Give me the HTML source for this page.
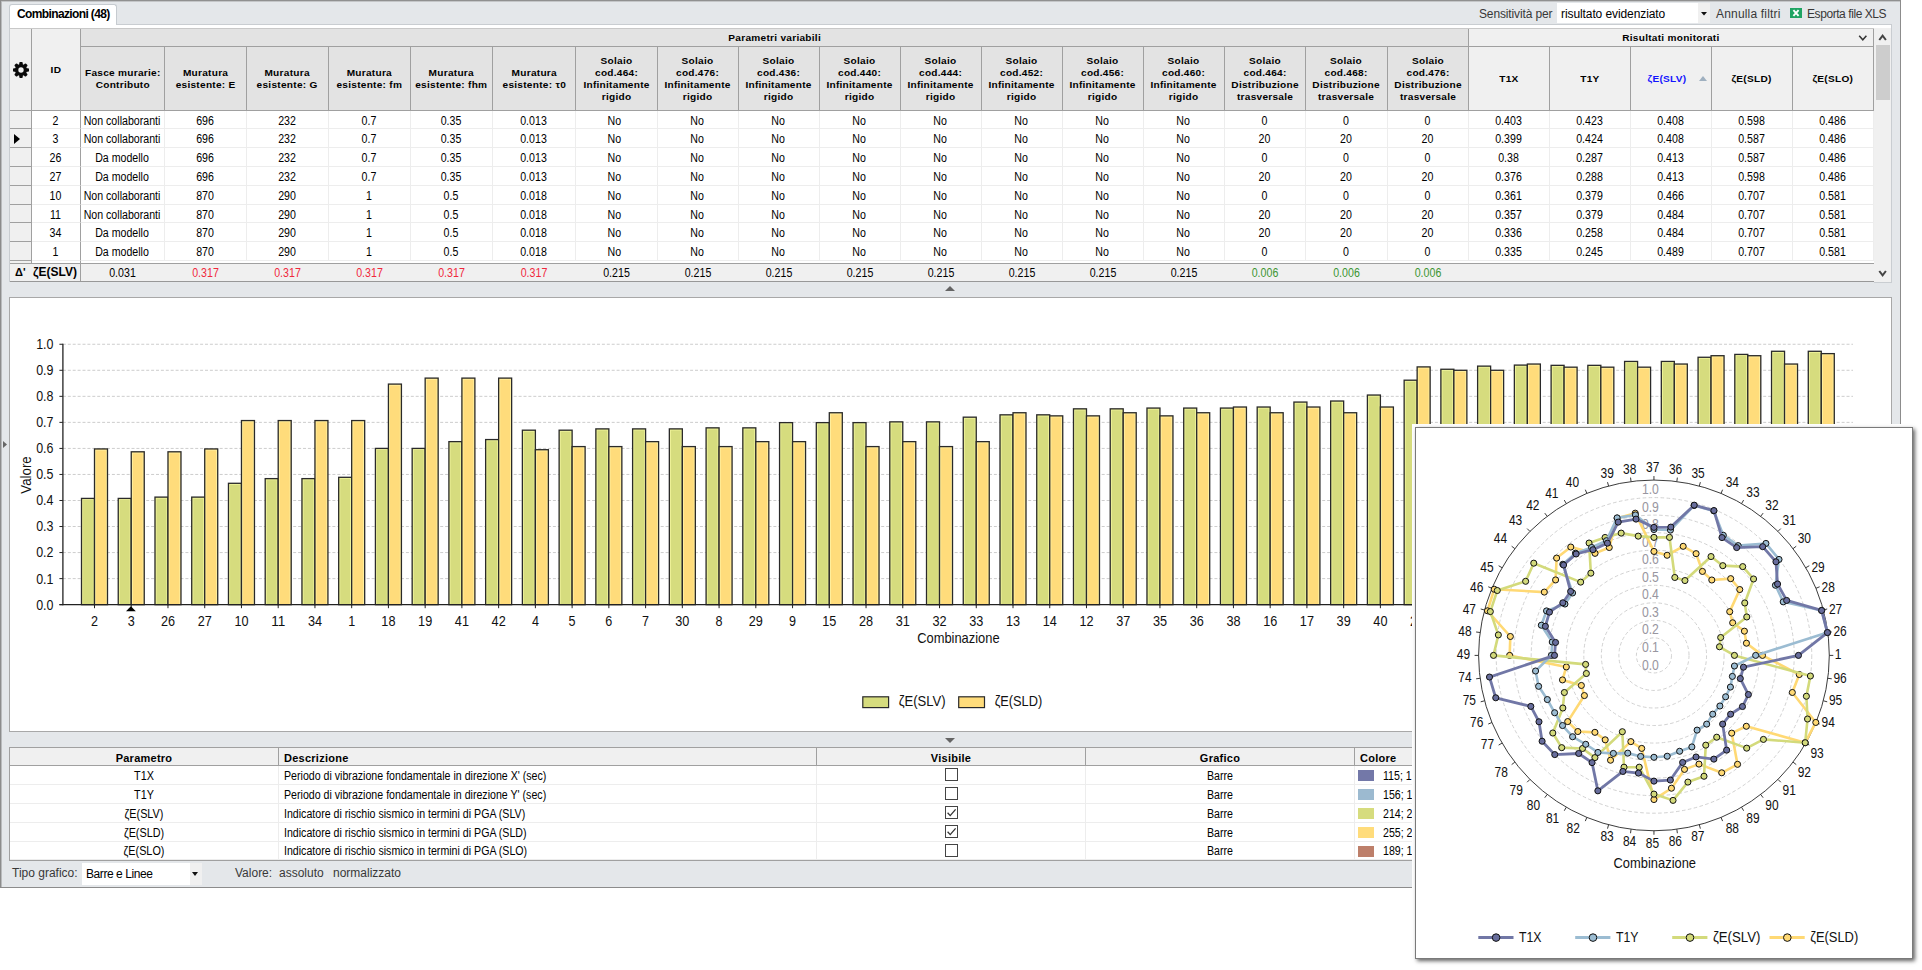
<!DOCTYPE html>
<html><head><meta charset="utf-8"><title>Combinazioni</title>
<style>
html,body{margin:0;padding:0;background:#fff;}
body{width:1922px;height:970px;overflow:hidden;position:relative;font-family:"Liberation Sans",sans-serif;color:#000;}
div,span{box-sizing:border-box;}
.a{position:absolute;}
.win{position:absolute;left:0;top:0;width:1901px;height:888px;background:#e4e7ea;}
.ui{font-size:12px;color:#383838;white-space:nowrap;}
.hc{position:absolute;display:flex;align-items:center;justify-content:center;text-align:center;font-weight:bold;font-size:9.3px;line-height:12px;letter-spacing:0.25px;color:#000;border-right:1px solid #a0a0a0;border-bottom:1px solid #a0a0a0;}
.hc i{display:block;font-style:normal;transform:scaleX(1.085);}
.dc i,.fc i{display:block;margin:0 -20px;font-style:normal;transform:translate(-0.5px,0.5px) scaleX(0.885);}
.dc i.s{transform:translate(-0.5px,1.2px) scaleX(0.885);}
.dc i.n{transform:translate(-0.9px,0.5px) scaleX(0.885);}
.dc i.s.n{transform:translate(-0.9px,1.2px) scaleX(0.885);}
.dc i.m{transform:translate(-2.2px,0.5px) scaleX(0.885);}
.dc i.s.m{transform:translate(-2.2px,1.2px) scaleX(0.885);}
.dc i.l{display:inline-block;margin:0;transform-origin:0 50%;}
.dc{position:absolute;text-align:center;font-size:12px;white-space:nowrap;color:#000;border-right:1px solid #ededed;border-bottom:1px solid #ededed;background:#fff;overflow:hidden;}
.rh{position:absolute;background:#f0f0f0;border-right:1px solid #a0a0a0;border-bottom:1px solid #a0a0a0;}
.fc{position:absolute;text-align:center;font-size:12px;white-space:nowrap;color:#000;}
.red{color:#f0283c;}
.grn{color:#3c9632;}
svg{position:absolute;overflow:visible;}
svg text{font-family:"Liberation Sans",sans-serif;}
</style></head><body>

<div class="win"></div>
<div class="a" style="left:0px;top:0px;width:1901px;height:1px;background:#909090;"></div>
<div class="a" style="left:0px;top:1px;width:1901px;height:1px;background:#c4c6c8;"></div>
<div class="a" style="left:0px;top:0px;width:1px;height:888px;background:#8c8c8c;"></div>
<div class="a" style="left:1px;top:1px;width:1px;height:886px;background:#b9bbbd;"></div>
<div class="a" style="left:1900px;top:0px;width:1px;height:888px;background:#8c8c8c;"></div>
<div class="a" style="left:0px;top:887px;width:1901px;height:1px;background:#8c8c8c;"></div>
<div class="a" style="left:9px;top:4px;width:108px;height:22px;background:#fff;border:1px solid #c6cbd0;border-bottom:none;border-radius:3px 3px 0 0;"></div>
<div class="a" style="left:17px;top:6px;width:100px;height:16px;font-size:12px;font-weight:bold;line-height:16px;white-space:nowrap;letter-spacing:-0.63px;">Combinazioni (48)</div>
<div class="a" style="left:116px;top:24px;width:1776px;height:1px;background:#c9cdd1;"></div>
<div class="a" style="left:10px;top:25px;width:1881px;height:3px;background:#fff;"></div>
<div class="a" style="left:9px;top:25px;width:1px;height:257px;background:#c9cdd1;"></div>
<div class="a" style="left:1891px;top:24px;width:1px;height:258px;background:#c9cdd1;"></div>
<div class="a ui" style="left:1479px;top:5.5px;width:80px;height:16px;line-height:16px;letter-spacing:-0.13px;">Sensitivit&agrave; per</div>
<div class="a" style="left:1557px;top:3px;width:141px;height:20px;background:#fff;"></div>
<div class="a" style="left:1698px;top:3px;width:12px;height:20px;background:#f0f0f0;"></div>
<div class="a ui" style="left:1561px;top:6px;width:130px;height:16px;line-height:16px;letter-spacing:-0.09px;color:#000;">risultato evidenziato</div>
<svg style="left:1701px;top:11.5px" width="6" height="3.5"><path d="M0 0H6L3 3.5Z" fill="#111"/></svg>
<div class="a ui" style="left:1716px;top:5.5px;width:70px;height:16px;line-height:16px;letter-spacing:0.18px;">Annulla filtri</div>
<div class="a" style="left:1790px;top:8px;width:12px;height:10px;background:#1fa463;"></div>
<svg style="left:1790px;top:8px" width="12" height="10"><path d="M3.4 2.2L8.6 7.8M8.6 2.2L3.4 7.8" stroke="#fff" stroke-width="1.9" fill="none"/></svg>
<div class="a ui" style="left:1807px;top:5.5px;width:90px;height:16px;line-height:16px;letter-spacing:-0.43px;">Esporta file XLS</div>
<svg style="left:3px;top:441px" width="4" height="7"><path d="M0 0L4 3.5L0 7Z" fill="#666"/></svg>
<svg style="left:945px;top:286px" width="10" height="5"><path d="M0 5H10L5 0Z" fill="#646464"/></svg>
<svg style="left:945px;top:738px" width="10" height="5"><path d="M0 0H10L5 5Z" fill="#646464"/></svg>
<div class="a" style="left:10px;top:28px;width:1864px;height:254px;background:#fff;"></div>
<div class="a" style="left:10px;top:28px;width:1864px;height:1px;background:#c8c8c8;"></div>
<div class="hc" style="left:10px;top:29px;width:22px;height:82px;background:#f0f0f0;"></div>
<svg style="left:13.1px;top:61.7px" width="16" height="16" viewBox="-8 -8 16 16"><g fill="#0a0a0a"><rect x="-1.75" y="-8" width="3.5" height="16" rx="1" transform="rotate(0)"/><rect x="-1.75" y="-8" width="3.5" height="16" rx="1" transform="rotate(45)"/><rect x="-1.75" y="-8" width="3.5" height="16" rx="1" transform="rotate(90)"/><rect x="-1.75" y="-8" width="3.5" height="16" rx="1" transform="rotate(135)"/><circle r="6.1"/></g><circle r="2.7" fill="#f0f0f0"/></svg>
<div class="hc" style="left:32px;top:29px;width:49px;height:82px;background:#f0f0f0;"><i>ID</i></div>
<div class="hc" style="left:81px;top:29px;width:1388px;height:18px;background:#e3e3e3;"><i>Parametri variabili</i></div>
<div class="hc" style="left:1469px;top:29px;width:405px;height:18px;background:#f0f0f0;"><i>Risultati monitorati</i></div>
<svg style="left:1858px;top:35px" width="10" height="6"><path d="M1.2 0.8L4.8 4.8L8.4 0.8" stroke="#333" stroke-width="1.5" fill="none"/></svg>
<div class="hc" style="left:81px;top:47px;width:84px;height:64px;background:#e3e3e3;"><i>Fasce murarie:<br>Contributo</i></div>
<div class="hc" style="left:165px;top:47px;width:82px;height:64px;background:#e3e3e3;"><i>Muratura<br>esistente: E</i></div>
<div class="hc" style="left:247px;top:47px;width:82px;height:64px;background:#e3e3e3;"><i>Muratura<br>esistente: G</i></div>
<div class="hc" style="left:329px;top:47px;width:82px;height:64px;background:#e3e3e3;"><i>Muratura<br>esistente: fm</i></div>
<div class="hc" style="left:411px;top:47px;width:82px;height:64px;background:#e3e3e3;"><i>Muratura<br>esistente: fhm</i></div>
<div class="hc" style="left:493px;top:47px;width:83px;height:64px;background:#e3e3e3;"><i>Muratura<br>esistente: &tau;0</i></div>
<div class="hc" style="left:576px;top:47px;width:82px;height:64px;background:#e3e3e3;"><i>Solaio<br>cod.464:<br>Infinitamente<br>rigido</i></div>
<div class="hc" style="left:658px;top:47px;width:81px;height:64px;background:#e3e3e3;"><i>Solaio<br>cod.476:<br>Infinitamente<br>rigido</i></div>
<div class="hc" style="left:739px;top:47px;width:81px;height:64px;background:#e3e3e3;"><i>Solaio<br>cod.436:<br>Infinitamente<br>rigido</i></div>
<div class="hc" style="left:820px;top:47px;width:81px;height:64px;background:#e3e3e3;"><i>Solaio<br>cod.440:<br>Infinitamente<br>rigido</i></div>
<div class="hc" style="left:901px;top:47px;width:81px;height:64px;background:#e3e3e3;"><i>Solaio<br>cod.444:<br>Infinitamente<br>rigido</i></div>
<div class="hc" style="left:982px;top:47px;width:81px;height:64px;background:#e3e3e3;"><i>Solaio<br>cod.452:<br>Infinitamente<br>rigido</i></div>
<div class="hc" style="left:1063px;top:47px;width:81px;height:64px;background:#e3e3e3;"><i>Solaio<br>cod.456:<br>Infinitamente<br>rigido</i></div>
<div class="hc" style="left:1144px;top:47px;width:81px;height:64px;background:#e3e3e3;"><i>Solaio<br>cod.460:<br>Infinitamente<br>rigido</i></div>
<div class="hc" style="left:1225px;top:47px;width:81px;height:64px;background:#e3e3e3;"><i>Solaio<br>cod.464:<br>Distribuzione<br>trasversale</i></div>
<div class="hc" style="left:1306px;top:47px;width:82px;height:64px;background:#e3e3e3;"><i>Solaio<br>cod.468:<br>Distribuzione<br>trasversale</i></div>
<div class="hc" style="left:1388px;top:47px;width:81px;height:64px;background:#e3e3e3;"><i>Solaio<br>cod.476:<br>Distribuzione<br>trasversale</i></div>
<div class="hc" style="left:1469px;top:47px;width:81px;height:64px;background:#f0f0f0;"><i>T1X</i></div>
<div class="hc" style="left:1550px;top:47px;width:81px;height:64px;background:#f0f0f0;"><i>T1Y</i></div>
<div class="hc" style="left:1631px;top:47px;width:81px;height:64px;background:#f0f0f0;color:#1414ff;padding-right:9px;"><i>&zeta;E(SLV)</i></div>
<div class="hc" style="left:1712px;top:47px;width:81px;height:64px;background:#f0f0f0;"><i>&zeta;E(SLD)</i></div>
<div class="hc" style="left:1793px;top:47px;width:81px;height:64px;background:#f0f0f0;"><i>&zeta;E(SLO)</i></div>
<svg style="left:1699px;top:76px" width="8" height="5"><path d="M0 5H8L4 0Z" fill="#9fb0c0"/></svg>
<div class="rh" style="left:10px;top:111px;width:22px;height:18px;"></div>
<div class="dc" style="left:32px;top:111px;width:49px;height:18px;line-height:18px;border-right:1px solid #a0a0a0;"><i>2</i></div>
<div class="dc" style="left:81px;top:111px;width:84px;height:18px;line-height:18px;"><i>Non collaboranti</i></div>
<div class="dc" style="left:165px;top:111px;width:82px;height:18px;line-height:18px;"><i>696</i></div>
<div class="dc" style="left:247px;top:111px;width:82px;height:18px;line-height:18px;"><i>232</i></div>
<div class="dc" style="left:329px;top:111px;width:82px;height:18px;line-height:18px;"><i>0.7</i></div>
<div class="dc" style="left:411px;top:111px;width:82px;height:18px;line-height:18px;"><i>0.35</i></div>
<div class="dc" style="left:493px;top:111px;width:83px;height:18px;line-height:18px;"><i>0.013</i></div>
<div class="dc" style="left:576px;top:111px;width:82px;height:18px;line-height:18px;"><i class="m">No</i></div>
<div class="dc" style="left:658px;top:111px;width:81px;height:18px;line-height:18px;"><i class="n">No</i></div>
<div class="dc" style="left:739px;top:111px;width:81px;height:18px;line-height:18px;"><i class="n">No</i></div>
<div class="dc" style="left:820px;top:111px;width:81px;height:18px;line-height:18px;"><i class="n">No</i></div>
<div class="dc" style="left:901px;top:111px;width:81px;height:18px;line-height:18px;"><i class="n">No</i></div>
<div class="dc" style="left:982px;top:111px;width:81px;height:18px;line-height:18px;"><i class="n">No</i></div>
<div class="dc" style="left:1063px;top:111px;width:81px;height:18px;line-height:18px;"><i class="n">No</i></div>
<div class="dc" style="left:1144px;top:111px;width:81px;height:18px;line-height:18px;"><i class="n">No</i></div>
<div class="dc" style="left:1225px;top:111px;width:81px;height:18px;line-height:18px;"><i>0</i></div>
<div class="dc" style="left:1306px;top:111px;width:82px;height:18px;line-height:18px;"><i>0</i></div>
<div class="dc" style="left:1388px;top:111px;width:81px;height:18px;line-height:18px;"><i>0</i></div>
<div class="dc" style="left:1469px;top:111px;width:81px;height:18px;line-height:18px;"><i>0.403</i></div>
<div class="dc" style="left:1550px;top:111px;width:81px;height:18px;line-height:18px;"><i>0.423</i></div>
<div class="dc" style="left:1631px;top:111px;width:81px;height:18px;line-height:18px;"><i>0.408</i></div>
<div class="dc" style="left:1712px;top:111px;width:81px;height:18px;line-height:18px;"><i>0.598</i></div>
<div class="dc" style="left:1793px;top:111px;width:81px;height:18px;line-height:18px;"><i>0.486</i></div>
<div class="rh" style="left:10px;top:129px;width:22px;height:19px;"></div>
<div class="dc" style="left:32px;top:129px;width:49px;height:19px;line-height:19px;border-right:1px solid #a0a0a0;"><i class="s">3</i></div>
<div class="dc" style="left:81px;top:129px;width:84px;height:19px;line-height:19px;"><i class="s">Non collaboranti</i></div>
<div class="dc" style="left:165px;top:129px;width:82px;height:19px;line-height:19px;"><i class="s">696</i></div>
<div class="dc" style="left:247px;top:129px;width:82px;height:19px;line-height:19px;"><i class="s">232</i></div>
<div class="dc" style="left:329px;top:129px;width:82px;height:19px;line-height:19px;"><i class="s">0.7</i></div>
<div class="dc" style="left:411px;top:129px;width:82px;height:19px;line-height:19px;"><i class="s">0.35</i></div>
<div class="dc" style="left:493px;top:129px;width:83px;height:19px;line-height:19px;"><i class="s">0.013</i></div>
<div class="dc" style="left:576px;top:129px;width:82px;height:19px;line-height:19px;"><i class="s m">No</i></div>
<div class="dc" style="left:658px;top:129px;width:81px;height:19px;line-height:19px;"><i class="s n">No</i></div>
<div class="dc" style="left:739px;top:129px;width:81px;height:19px;line-height:19px;"><i class="s n">No</i></div>
<div class="dc" style="left:820px;top:129px;width:81px;height:19px;line-height:19px;"><i class="s n">No</i></div>
<div class="dc" style="left:901px;top:129px;width:81px;height:19px;line-height:19px;"><i class="s n">No</i></div>
<div class="dc" style="left:982px;top:129px;width:81px;height:19px;line-height:19px;"><i class="s n">No</i></div>
<div class="dc" style="left:1063px;top:129px;width:81px;height:19px;line-height:19px;"><i class="s n">No</i></div>
<div class="dc" style="left:1144px;top:129px;width:81px;height:19px;line-height:19px;"><i class="s n">No</i></div>
<div class="dc" style="left:1225px;top:129px;width:81px;height:19px;line-height:19px;"><i class="s">20</i></div>
<div class="dc" style="left:1306px;top:129px;width:82px;height:19px;line-height:19px;"><i class="s">20</i></div>
<div class="dc" style="left:1388px;top:129px;width:81px;height:19px;line-height:19px;"><i class="s">20</i></div>
<div class="dc" style="left:1469px;top:129px;width:81px;height:19px;line-height:19px;"><i class="s">0.399</i></div>
<div class="dc" style="left:1550px;top:129px;width:81px;height:19px;line-height:19px;"><i class="s">0.424</i></div>
<div class="dc" style="left:1631px;top:129px;width:81px;height:19px;line-height:19px;"><i class="s">0.408</i></div>
<div class="dc" style="left:1712px;top:129px;width:81px;height:19px;line-height:19px;"><i class="s">0.587</i></div>
<div class="dc" style="left:1793px;top:129px;width:81px;height:19px;line-height:19px;"><i class="s">0.486</i></div>
<div class="rh" style="left:10px;top:148px;width:22px;height:19px;"></div>
<div class="dc" style="left:32px;top:148px;width:49px;height:19px;line-height:19px;border-right:1px solid #a0a0a0;"><i class="s">26</i></div>
<div class="dc" style="left:81px;top:148px;width:84px;height:19px;line-height:19px;"><i class="s">Da modello</i></div>
<div class="dc" style="left:165px;top:148px;width:82px;height:19px;line-height:19px;"><i class="s">696</i></div>
<div class="dc" style="left:247px;top:148px;width:82px;height:19px;line-height:19px;"><i class="s">232</i></div>
<div class="dc" style="left:329px;top:148px;width:82px;height:19px;line-height:19px;"><i class="s">0.7</i></div>
<div class="dc" style="left:411px;top:148px;width:82px;height:19px;line-height:19px;"><i class="s">0.35</i></div>
<div class="dc" style="left:493px;top:148px;width:83px;height:19px;line-height:19px;"><i class="s">0.013</i></div>
<div class="dc" style="left:576px;top:148px;width:82px;height:19px;line-height:19px;"><i class="s m">No</i></div>
<div class="dc" style="left:658px;top:148px;width:81px;height:19px;line-height:19px;"><i class="s n">No</i></div>
<div class="dc" style="left:739px;top:148px;width:81px;height:19px;line-height:19px;"><i class="s n">No</i></div>
<div class="dc" style="left:820px;top:148px;width:81px;height:19px;line-height:19px;"><i class="s n">No</i></div>
<div class="dc" style="left:901px;top:148px;width:81px;height:19px;line-height:19px;"><i class="s n">No</i></div>
<div class="dc" style="left:982px;top:148px;width:81px;height:19px;line-height:19px;"><i class="s n">No</i></div>
<div class="dc" style="left:1063px;top:148px;width:81px;height:19px;line-height:19px;"><i class="s n">No</i></div>
<div class="dc" style="left:1144px;top:148px;width:81px;height:19px;line-height:19px;"><i class="s n">No</i></div>
<div class="dc" style="left:1225px;top:148px;width:81px;height:19px;line-height:19px;"><i class="s">0</i></div>
<div class="dc" style="left:1306px;top:148px;width:82px;height:19px;line-height:19px;"><i class="s">0</i></div>
<div class="dc" style="left:1388px;top:148px;width:81px;height:19px;line-height:19px;"><i class="s">0</i></div>
<div class="dc" style="left:1469px;top:148px;width:81px;height:19px;line-height:19px;"><i class="s">0.38</i></div>
<div class="dc" style="left:1550px;top:148px;width:81px;height:19px;line-height:19px;"><i class="s">0.287</i></div>
<div class="dc" style="left:1631px;top:148px;width:81px;height:19px;line-height:19px;"><i class="s">0.413</i></div>
<div class="dc" style="left:1712px;top:148px;width:81px;height:19px;line-height:19px;"><i class="s">0.587</i></div>
<div class="dc" style="left:1793px;top:148px;width:81px;height:19px;line-height:19px;"><i class="s">0.486</i></div>
<div class="rh" style="left:10px;top:167px;width:22px;height:19px;"></div>
<div class="dc" style="left:32px;top:167px;width:49px;height:19px;line-height:19px;border-right:1px solid #a0a0a0;"><i>27</i></div>
<div class="dc" style="left:81px;top:167px;width:84px;height:19px;line-height:19px;"><i>Da modello</i></div>
<div class="dc" style="left:165px;top:167px;width:82px;height:19px;line-height:19px;"><i>696</i></div>
<div class="dc" style="left:247px;top:167px;width:82px;height:19px;line-height:19px;"><i>232</i></div>
<div class="dc" style="left:329px;top:167px;width:82px;height:19px;line-height:19px;"><i>0.7</i></div>
<div class="dc" style="left:411px;top:167px;width:82px;height:19px;line-height:19px;"><i>0.35</i></div>
<div class="dc" style="left:493px;top:167px;width:83px;height:19px;line-height:19px;"><i>0.013</i></div>
<div class="dc" style="left:576px;top:167px;width:82px;height:19px;line-height:19px;"><i class="m">No</i></div>
<div class="dc" style="left:658px;top:167px;width:81px;height:19px;line-height:19px;"><i class="n">No</i></div>
<div class="dc" style="left:739px;top:167px;width:81px;height:19px;line-height:19px;"><i class="n">No</i></div>
<div class="dc" style="left:820px;top:167px;width:81px;height:19px;line-height:19px;"><i class="n">No</i></div>
<div class="dc" style="left:901px;top:167px;width:81px;height:19px;line-height:19px;"><i class="n">No</i></div>
<div class="dc" style="left:982px;top:167px;width:81px;height:19px;line-height:19px;"><i class="n">No</i></div>
<div class="dc" style="left:1063px;top:167px;width:81px;height:19px;line-height:19px;"><i class="n">No</i></div>
<div class="dc" style="left:1144px;top:167px;width:81px;height:19px;line-height:19px;"><i class="n">No</i></div>
<div class="dc" style="left:1225px;top:167px;width:81px;height:19px;line-height:19px;"><i>20</i></div>
<div class="dc" style="left:1306px;top:167px;width:82px;height:19px;line-height:19px;"><i>20</i></div>
<div class="dc" style="left:1388px;top:167px;width:81px;height:19px;line-height:19px;"><i>20</i></div>
<div class="dc" style="left:1469px;top:167px;width:81px;height:19px;line-height:19px;"><i>0.376</i></div>
<div class="dc" style="left:1550px;top:167px;width:81px;height:19px;line-height:19px;"><i>0.288</i></div>
<div class="dc" style="left:1631px;top:167px;width:81px;height:19px;line-height:19px;"><i>0.413</i></div>
<div class="dc" style="left:1712px;top:167px;width:81px;height:19px;line-height:19px;"><i>0.598</i></div>
<div class="dc" style="left:1793px;top:167px;width:81px;height:19px;line-height:19px;"><i>0.486</i></div>
<div class="rh" style="left:10px;top:186px;width:22px;height:19px;"></div>
<div class="dc" style="left:32px;top:186px;width:49px;height:19px;line-height:19px;border-right:1px solid #a0a0a0;"><i>10</i></div>
<div class="dc" style="left:81px;top:186px;width:84px;height:19px;line-height:19px;"><i>Non collaboranti</i></div>
<div class="dc" style="left:165px;top:186px;width:82px;height:19px;line-height:19px;"><i>870</i></div>
<div class="dc" style="left:247px;top:186px;width:82px;height:19px;line-height:19px;"><i>290</i></div>
<div class="dc" style="left:329px;top:186px;width:82px;height:19px;line-height:19px;"><i>1</i></div>
<div class="dc" style="left:411px;top:186px;width:82px;height:19px;line-height:19px;"><i>0.5</i></div>
<div class="dc" style="left:493px;top:186px;width:83px;height:19px;line-height:19px;"><i>0.018</i></div>
<div class="dc" style="left:576px;top:186px;width:82px;height:19px;line-height:19px;"><i class="m">No</i></div>
<div class="dc" style="left:658px;top:186px;width:81px;height:19px;line-height:19px;"><i class="n">No</i></div>
<div class="dc" style="left:739px;top:186px;width:81px;height:19px;line-height:19px;"><i class="n">No</i></div>
<div class="dc" style="left:820px;top:186px;width:81px;height:19px;line-height:19px;"><i class="n">No</i></div>
<div class="dc" style="left:901px;top:186px;width:81px;height:19px;line-height:19px;"><i class="n">No</i></div>
<div class="dc" style="left:982px;top:186px;width:81px;height:19px;line-height:19px;"><i class="n">No</i></div>
<div class="dc" style="left:1063px;top:186px;width:81px;height:19px;line-height:19px;"><i class="n">No</i></div>
<div class="dc" style="left:1144px;top:186px;width:81px;height:19px;line-height:19px;"><i class="n">No</i></div>
<div class="dc" style="left:1225px;top:186px;width:81px;height:19px;line-height:19px;"><i>0</i></div>
<div class="dc" style="left:1306px;top:186px;width:82px;height:19px;line-height:19px;"><i>0</i></div>
<div class="dc" style="left:1388px;top:186px;width:81px;height:19px;line-height:19px;"><i>0</i></div>
<div class="dc" style="left:1469px;top:186px;width:81px;height:19px;line-height:19px;"><i>0.361</i></div>
<div class="dc" style="left:1550px;top:186px;width:81px;height:19px;line-height:19px;"><i>0.379</i></div>
<div class="dc" style="left:1631px;top:186px;width:81px;height:19px;line-height:19px;"><i>0.466</i></div>
<div class="dc" style="left:1712px;top:186px;width:81px;height:19px;line-height:19px;"><i>0.707</i></div>
<div class="dc" style="left:1793px;top:186px;width:81px;height:19px;line-height:19px;"><i>0.581</i></div>
<div class="rh" style="left:10px;top:205px;width:22px;height:18px;"></div>
<div class="dc" style="left:32px;top:205px;width:49px;height:18px;line-height:18px;border-right:1px solid #a0a0a0;"><i>11</i></div>
<div class="dc" style="left:81px;top:205px;width:84px;height:18px;line-height:18px;"><i>Non collaboranti</i></div>
<div class="dc" style="left:165px;top:205px;width:82px;height:18px;line-height:18px;"><i>870</i></div>
<div class="dc" style="left:247px;top:205px;width:82px;height:18px;line-height:18px;"><i>290</i></div>
<div class="dc" style="left:329px;top:205px;width:82px;height:18px;line-height:18px;"><i>1</i></div>
<div class="dc" style="left:411px;top:205px;width:82px;height:18px;line-height:18px;"><i>0.5</i></div>
<div class="dc" style="left:493px;top:205px;width:83px;height:18px;line-height:18px;"><i>0.018</i></div>
<div class="dc" style="left:576px;top:205px;width:82px;height:18px;line-height:18px;"><i class="m">No</i></div>
<div class="dc" style="left:658px;top:205px;width:81px;height:18px;line-height:18px;"><i class="n">No</i></div>
<div class="dc" style="left:739px;top:205px;width:81px;height:18px;line-height:18px;"><i class="n">No</i></div>
<div class="dc" style="left:820px;top:205px;width:81px;height:18px;line-height:18px;"><i class="n">No</i></div>
<div class="dc" style="left:901px;top:205px;width:81px;height:18px;line-height:18px;"><i class="n">No</i></div>
<div class="dc" style="left:982px;top:205px;width:81px;height:18px;line-height:18px;"><i class="n">No</i></div>
<div class="dc" style="left:1063px;top:205px;width:81px;height:18px;line-height:18px;"><i class="n">No</i></div>
<div class="dc" style="left:1144px;top:205px;width:81px;height:18px;line-height:18px;"><i class="n">No</i></div>
<div class="dc" style="left:1225px;top:205px;width:81px;height:18px;line-height:18px;"><i>20</i></div>
<div class="dc" style="left:1306px;top:205px;width:82px;height:18px;line-height:18px;"><i>20</i></div>
<div class="dc" style="left:1388px;top:205px;width:81px;height:18px;line-height:18px;"><i>20</i></div>
<div class="dc" style="left:1469px;top:205px;width:81px;height:18px;line-height:18px;"><i>0.357</i></div>
<div class="dc" style="left:1550px;top:205px;width:81px;height:18px;line-height:18px;"><i>0.379</i></div>
<div class="dc" style="left:1631px;top:205px;width:81px;height:18px;line-height:18px;"><i>0.484</i></div>
<div class="dc" style="left:1712px;top:205px;width:81px;height:18px;line-height:18px;"><i>0.707</i></div>
<div class="dc" style="left:1793px;top:205px;width:81px;height:18px;line-height:18px;"><i>0.581</i></div>
<div class="rh" style="left:10px;top:223px;width:22px;height:19px;"></div>
<div class="dc" style="left:32px;top:223px;width:49px;height:19px;line-height:19px;border-right:1px solid #a0a0a0;"><i class="s">34</i></div>
<div class="dc" style="left:81px;top:223px;width:84px;height:19px;line-height:19px;"><i class="s">Da modello</i></div>
<div class="dc" style="left:165px;top:223px;width:82px;height:19px;line-height:19px;"><i class="s">870</i></div>
<div class="dc" style="left:247px;top:223px;width:82px;height:19px;line-height:19px;"><i class="s">290</i></div>
<div class="dc" style="left:329px;top:223px;width:82px;height:19px;line-height:19px;"><i class="s">1</i></div>
<div class="dc" style="left:411px;top:223px;width:82px;height:19px;line-height:19px;"><i class="s">0.5</i></div>
<div class="dc" style="left:493px;top:223px;width:83px;height:19px;line-height:19px;"><i class="s">0.018</i></div>
<div class="dc" style="left:576px;top:223px;width:82px;height:19px;line-height:19px;"><i class="s m">No</i></div>
<div class="dc" style="left:658px;top:223px;width:81px;height:19px;line-height:19px;"><i class="s n">No</i></div>
<div class="dc" style="left:739px;top:223px;width:81px;height:19px;line-height:19px;"><i class="s n">No</i></div>
<div class="dc" style="left:820px;top:223px;width:81px;height:19px;line-height:19px;"><i class="s n">No</i></div>
<div class="dc" style="left:901px;top:223px;width:81px;height:19px;line-height:19px;"><i class="s n">No</i></div>
<div class="dc" style="left:982px;top:223px;width:81px;height:19px;line-height:19px;"><i class="s n">No</i></div>
<div class="dc" style="left:1063px;top:223px;width:81px;height:19px;line-height:19px;"><i class="s n">No</i></div>
<div class="dc" style="left:1144px;top:223px;width:81px;height:19px;line-height:19px;"><i class="s n">No</i></div>
<div class="dc" style="left:1225px;top:223px;width:81px;height:19px;line-height:19px;"><i class="s">20</i></div>
<div class="dc" style="left:1306px;top:223px;width:82px;height:19px;line-height:19px;"><i class="s">20</i></div>
<div class="dc" style="left:1388px;top:223px;width:81px;height:19px;line-height:19px;"><i class="s">20</i></div>
<div class="dc" style="left:1469px;top:223px;width:81px;height:19px;line-height:19px;"><i class="s">0.336</i></div>
<div class="dc" style="left:1550px;top:223px;width:81px;height:19px;line-height:19px;"><i class="s">0.258</i></div>
<div class="dc" style="left:1631px;top:223px;width:81px;height:19px;line-height:19px;"><i class="s">0.484</i></div>
<div class="dc" style="left:1712px;top:223px;width:81px;height:19px;line-height:19px;"><i class="s">0.707</i></div>
<div class="dc" style="left:1793px;top:223px;width:81px;height:19px;line-height:19px;"><i class="s">0.581</i></div>
<div class="rh" style="left:10px;top:242px;width:22px;height:19px;"></div>
<div class="dc" style="left:32px;top:242px;width:49px;height:19px;line-height:19px;border-right:1px solid #a0a0a0;"><i class="s">1</i></div>
<div class="dc" style="left:81px;top:242px;width:84px;height:19px;line-height:19px;"><i class="s">Da modello</i></div>
<div class="dc" style="left:165px;top:242px;width:82px;height:19px;line-height:19px;"><i class="s">870</i></div>
<div class="dc" style="left:247px;top:242px;width:82px;height:19px;line-height:19px;"><i class="s">290</i></div>
<div class="dc" style="left:329px;top:242px;width:82px;height:19px;line-height:19px;"><i class="s">1</i></div>
<div class="dc" style="left:411px;top:242px;width:82px;height:19px;line-height:19px;"><i class="s">0.5</i></div>
<div class="dc" style="left:493px;top:242px;width:83px;height:19px;line-height:19px;"><i class="s">0.018</i></div>
<div class="dc" style="left:576px;top:242px;width:82px;height:19px;line-height:19px;"><i class="s m">No</i></div>
<div class="dc" style="left:658px;top:242px;width:81px;height:19px;line-height:19px;"><i class="s n">No</i></div>
<div class="dc" style="left:739px;top:242px;width:81px;height:19px;line-height:19px;"><i class="s n">No</i></div>
<div class="dc" style="left:820px;top:242px;width:81px;height:19px;line-height:19px;"><i class="s n">No</i></div>
<div class="dc" style="left:901px;top:242px;width:81px;height:19px;line-height:19px;"><i class="s n">No</i></div>
<div class="dc" style="left:982px;top:242px;width:81px;height:19px;line-height:19px;"><i class="s n">No</i></div>
<div class="dc" style="left:1063px;top:242px;width:81px;height:19px;line-height:19px;"><i class="s n">No</i></div>
<div class="dc" style="left:1144px;top:242px;width:81px;height:19px;line-height:19px;"><i class="s n">No</i></div>
<div class="dc" style="left:1225px;top:242px;width:81px;height:19px;line-height:19px;"><i class="s">0</i></div>
<div class="dc" style="left:1306px;top:242px;width:82px;height:19px;line-height:19px;"><i class="s">0</i></div>
<div class="dc" style="left:1388px;top:242px;width:81px;height:19px;line-height:19px;"><i class="s">0</i></div>
<div class="dc" style="left:1469px;top:242px;width:81px;height:19px;line-height:19px;"><i class="s">0.335</i></div>
<div class="dc" style="left:1550px;top:242px;width:81px;height:19px;line-height:19px;"><i class="s">0.245</i></div>
<div class="dc" style="left:1631px;top:242px;width:81px;height:19px;line-height:19px;"><i class="s">0.489</i></div>
<div class="dc" style="left:1712px;top:242px;width:81px;height:19px;line-height:19px;"><i class="s">0.707</i></div>
<div class="dc" style="left:1793px;top:242px;width:81px;height:19px;line-height:19px;"><i class="s">0.581</i></div>
<div class="rh" style="left:10px;top:261px;width:22px;height:2px;border-bottom:none;"></div>
<div class="a" style="left:32px;top:261px;width:49px;height:2px;background:#fff;border-right:1px solid #a0a0a0;"></div>
<svg style="left:14px;top:134px" width="6" height="10"><path d="M0 0L6 5L0 10Z" fill="#000"/></svg>
<div class="a" style="left:10px;top:263px;width:1864px;height:19px;background:#f0f0f0;border-top:1px solid #a0a0a0;border-bottom:1px solid #989898;"></div>
<div class="a" style="left:80px;top:263px;width:1px;height:18px;background:#a0a0a0;"></div>
<div class="a" style="left:15px;top:264px;width:20px;height:17px;line-height:17px;font-weight:bold;font-size:11px;white-space:nowrap;">&Delta;'</div>
<div class="a" style="left:33px;top:264px;width:50px;height:17px;line-height:17px;font-weight:bold;font-size:12px;white-space:nowrap;letter-spacing:0px;">&zeta;E(SLV)</div>
<div class="fc " style="left:81px;top:264px;width:84px;height:17px;line-height:17px;"><i>0.031</i></div>
<div class="fc red" style="left:165px;top:264px;width:82px;height:17px;line-height:17px;"><i>0.317</i></div>
<div class="fc red" style="left:247px;top:264px;width:82px;height:17px;line-height:17px;"><i>0.317</i></div>
<div class="fc red" style="left:329px;top:264px;width:82px;height:17px;line-height:17px;"><i>0.317</i></div>
<div class="fc red" style="left:411px;top:264px;width:82px;height:17px;line-height:17px;"><i>0.317</i></div>
<div class="fc red" style="left:493px;top:264px;width:83px;height:17px;line-height:17px;"><i>0.317</i></div>
<div class="fc " style="left:576px;top:264px;width:82px;height:17px;line-height:17px;"><i>0.215</i></div>
<div class="fc " style="left:658px;top:264px;width:81px;height:17px;line-height:17px;"><i>0.215</i></div>
<div class="fc " style="left:739px;top:264px;width:81px;height:17px;line-height:17px;"><i>0.215</i></div>
<div class="fc " style="left:820px;top:264px;width:81px;height:17px;line-height:17px;"><i>0.215</i></div>
<div class="fc " style="left:901px;top:264px;width:81px;height:17px;line-height:17px;"><i>0.215</i></div>
<div class="fc " style="left:982px;top:264px;width:81px;height:17px;line-height:17px;"><i>0.215</i></div>
<div class="fc " style="left:1063px;top:264px;width:81px;height:17px;line-height:17px;"><i>0.215</i></div>
<div class="fc " style="left:1144px;top:264px;width:81px;height:17px;line-height:17px;"><i>0.215</i></div>
<div class="fc grn" style="left:1225px;top:264px;width:81px;height:17px;line-height:17px;"><i>0.006</i></div>
<div class="fc grn" style="left:1306px;top:264px;width:82px;height:17px;line-height:17px;"><i>0.006</i></div>
<div class="fc grn" style="left:1388px;top:264px;width:81px;height:17px;line-height:17px;"><i>0.006</i></div>
<div class="a" style="left:1874px;top:28px;width:17px;height:254px;background:#f0f0f0;"></div>
<div class="a" style="left:1874px;top:282px;width:18px;height:1px;background:#c9cdd1;"></div>
<div class="a" style="left:1876px;top:45px;width:14px;height:55px;background:#cdcdcd;"></div>
<svg style="left:1878px;top:34px" width="10" height="7"><path d="M1.3 6L4.6 1.6L7.9 6" stroke="#444" stroke-width="2" fill="none"/></svg>
<svg style="left:1878px;top:270px" width="10" height="7"><path d="M1.3 1L4.6 5.4L7.9 1" stroke="#444" stroke-width="2" fill="none"/></svg>
<div class="a" style="left:9px;top:297px;width:1883px;height:435px;background:#fff;border:1px solid #a8a8a8;"></div>
<svg style="left:0;top:0" width="1922" height="970">
<line x1="62.9" y1="578.61" x2="1853.0" y2="578.61" stroke="#cdcdcd" stroke-width="1" stroke-dasharray="3 1.9"/>
<line x1="62.9" y1="552.57" x2="1853.0" y2="552.57" stroke="#cdcdcd" stroke-width="1" stroke-dasharray="3 1.9"/>
<line x1="62.9" y1="526.53" x2="1853.0" y2="526.53" stroke="#cdcdcd" stroke-width="1" stroke-dasharray="3 1.9"/>
<line x1="62.9" y1="500.49" x2="1853.0" y2="500.49" stroke="#cdcdcd" stroke-width="1" stroke-dasharray="3 1.9"/>
<line x1="62.9" y1="474.45" x2="1853.0" y2="474.45" stroke="#cdcdcd" stroke-width="1" stroke-dasharray="3 1.9"/>
<line x1="62.9" y1="448.41" x2="1853.0" y2="448.41" stroke="#cdcdcd" stroke-width="1" stroke-dasharray="3 1.9"/>
<line x1="62.9" y1="422.37" x2="1853.0" y2="422.37" stroke="#cdcdcd" stroke-width="1" stroke-dasharray="3 1.9"/>
<line x1="62.9" y1="396.33" x2="1853.0" y2="396.33" stroke="#cdcdcd" stroke-width="1" stroke-dasharray="3 1.9"/>
<line x1="62.9" y1="370.29" x2="1853.0" y2="370.29" stroke="#cdcdcd" stroke-width="1" stroke-dasharray="3 1.9"/>
<line x1="62.9" y1="344.25" x2="1853.0" y2="344.25" stroke="#cdcdcd" stroke-width="1" stroke-dasharray="3 1.9"/>
<rect x="81.50" y="498.41" width="13.00" height="106.24" fill="#d6dc7e"/>
<rect x="82.60" y="499.51" width="10.80" height="105.14" fill="none" stroke="#eef29a" stroke-width="1"/>
<rect x="81.50" y="498.41" width="13.00" height="106.24" fill="none" stroke="#2a2a2a" stroke-width="1.3"/>
<rect x="94.50" y="448.93" width="13.00" height="155.72" fill="#ffdc7b"/>
<rect x="95.60" y="450.03" width="10.80" height="154.62" fill="none" stroke="#fff0a0" stroke-width="1"/>
<rect x="94.50" y="448.93" width="13.00" height="155.72" fill="none" stroke="#2a2a2a" stroke-width="1.3"/>
<rect x="118.24" y="498.41" width="13.00" height="106.24" fill="#d6dc7e"/>
<rect x="119.34" y="499.51" width="10.80" height="105.14" fill="none" stroke="#eef29a" stroke-width="1"/>
<rect x="118.24" y="498.41" width="13.00" height="106.24" fill="none" stroke="#2a2a2a" stroke-width="1.3"/>
<rect x="131.24" y="451.80" width="13.00" height="152.85" fill="#ffdc7b"/>
<rect x="132.34" y="452.90" width="10.80" height="151.75" fill="none" stroke="#fff0a0" stroke-width="1"/>
<rect x="131.24" y="451.80" width="13.00" height="152.85" fill="none" stroke="#2a2a2a" stroke-width="1.3"/>
<rect x="154.98" y="497.10" width="13.00" height="107.55" fill="#d6dc7e"/>
<rect x="156.08" y="498.20" width="10.80" height="106.45" fill="none" stroke="#eef29a" stroke-width="1"/>
<rect x="154.98" y="497.10" width="13.00" height="107.55" fill="none" stroke="#2a2a2a" stroke-width="1.3"/>
<rect x="167.98" y="451.80" width="13.00" height="152.85" fill="#ffdc7b"/>
<rect x="169.08" y="452.90" width="10.80" height="151.75" fill="none" stroke="#fff0a0" stroke-width="1"/>
<rect x="167.98" y="451.80" width="13.00" height="152.85" fill="none" stroke="#2a2a2a" stroke-width="1.3"/>
<rect x="191.72" y="497.10" width="13.00" height="107.55" fill="#d6dc7e"/>
<rect x="192.82" y="498.20" width="10.80" height="106.45" fill="none" stroke="#eef29a" stroke-width="1"/>
<rect x="191.72" y="497.10" width="13.00" height="107.55" fill="none" stroke="#2a2a2a" stroke-width="1.3"/>
<rect x="204.72" y="448.93" width="13.00" height="155.72" fill="#ffdc7b"/>
<rect x="205.82" y="450.03" width="10.80" height="154.62" fill="none" stroke="#fff0a0" stroke-width="1"/>
<rect x="204.72" y="448.93" width="13.00" height="155.72" fill="none" stroke="#2a2a2a" stroke-width="1.3"/>
<rect x="228.46" y="483.30" width="13.00" height="121.35" fill="#d6dc7e"/>
<rect x="229.56" y="484.40" width="10.80" height="120.25" fill="none" stroke="#eef29a" stroke-width="1"/>
<rect x="228.46" y="483.30" width="13.00" height="121.35" fill="none" stroke="#2a2a2a" stroke-width="1.3"/>
<rect x="241.46" y="420.55" width="13.00" height="184.10" fill="#ffdc7b"/>
<rect x="242.56" y="421.65" width="10.80" height="183.00" fill="none" stroke="#fff0a0" stroke-width="1"/>
<rect x="241.46" y="420.55" width="13.00" height="184.10" fill="none" stroke="#2a2a2a" stroke-width="1.3"/>
<rect x="265.20" y="478.62" width="13.00" height="126.03" fill="#d6dc7e"/>
<rect x="266.30" y="479.72" width="10.80" height="124.93" fill="none" stroke="#eef29a" stroke-width="1"/>
<rect x="265.20" y="478.62" width="13.00" height="126.03" fill="none" stroke="#2a2a2a" stroke-width="1.3"/>
<rect x="278.20" y="420.55" width="13.00" height="184.10" fill="#ffdc7b"/>
<rect x="279.30" y="421.65" width="10.80" height="183.00" fill="none" stroke="#fff0a0" stroke-width="1"/>
<rect x="278.20" y="420.55" width="13.00" height="184.10" fill="none" stroke="#2a2a2a" stroke-width="1.3"/>
<rect x="301.94" y="478.62" width="13.00" height="126.03" fill="#d6dc7e"/>
<rect x="303.04" y="479.72" width="10.80" height="124.93" fill="none" stroke="#eef29a" stroke-width="1"/>
<rect x="301.94" y="478.62" width="13.00" height="126.03" fill="none" stroke="#2a2a2a" stroke-width="1.3"/>
<rect x="314.94" y="420.55" width="13.00" height="184.10" fill="#ffdc7b"/>
<rect x="316.04" y="421.65" width="10.80" height="183.00" fill="none" stroke="#fff0a0" stroke-width="1"/>
<rect x="314.94" y="420.55" width="13.00" height="184.10" fill="none" stroke="#2a2a2a" stroke-width="1.3"/>
<rect x="338.68" y="477.31" width="13.00" height="127.34" fill="#d6dc7e"/>
<rect x="339.78" y="478.41" width="10.80" height="126.24" fill="none" stroke="#eef29a" stroke-width="1"/>
<rect x="338.68" y="477.31" width="13.00" height="127.34" fill="none" stroke="#2a2a2a" stroke-width="1.3"/>
<rect x="351.68" y="420.55" width="13.00" height="184.10" fill="#ffdc7b"/>
<rect x="352.78" y="421.65" width="10.80" height="183.00" fill="none" stroke="#fff0a0" stroke-width="1"/>
<rect x="351.68" y="420.55" width="13.00" height="184.10" fill="none" stroke="#2a2a2a" stroke-width="1.3"/>
<rect x="375.42" y="448.41" width="13.00" height="156.24" fill="#d6dc7e"/>
<rect x="376.52" y="449.51" width="10.80" height="155.14" fill="none" stroke="#eef29a" stroke-width="1"/>
<rect x="375.42" y="448.41" width="13.00" height="156.24" fill="none" stroke="#2a2a2a" stroke-width="1.3"/>
<rect x="388.42" y="384.09" width="13.00" height="220.56" fill="#ffdc7b"/>
<rect x="389.52" y="385.19" width="10.80" height="219.46" fill="none" stroke="#fff0a0" stroke-width="1"/>
<rect x="388.42" y="384.09" width="13.00" height="220.56" fill="none" stroke="#2a2a2a" stroke-width="1.3"/>
<rect x="412.16" y="448.41" width="13.00" height="156.24" fill="#d6dc7e"/>
<rect x="413.26" y="449.51" width="10.80" height="155.14" fill="none" stroke="#eef29a" stroke-width="1"/>
<rect x="412.16" y="448.41" width="13.00" height="156.24" fill="none" stroke="#2a2a2a" stroke-width="1.3"/>
<rect x="425.16" y="378.10" width="13.00" height="226.55" fill="#ffdc7b"/>
<rect x="426.26" y="379.20" width="10.80" height="225.45" fill="none" stroke="#fff0a0" stroke-width="1"/>
<rect x="425.16" y="378.10" width="13.00" height="226.55" fill="none" stroke="#2a2a2a" stroke-width="1.3"/>
<rect x="448.90" y="441.64" width="13.00" height="163.01" fill="#d6dc7e"/>
<rect x="450.00" y="442.74" width="10.80" height="161.91" fill="none" stroke="#eef29a" stroke-width="1"/>
<rect x="448.90" y="441.64" width="13.00" height="163.01" fill="none" stroke="#2a2a2a" stroke-width="1.3"/>
<rect x="461.90" y="378.10" width="13.00" height="226.55" fill="#ffdc7b"/>
<rect x="463.00" y="379.20" width="10.80" height="225.45" fill="none" stroke="#fff0a0" stroke-width="1"/>
<rect x="461.90" y="378.10" width="13.00" height="226.55" fill="none" stroke="#2a2a2a" stroke-width="1.3"/>
<rect x="485.64" y="439.56" width="13.00" height="165.09" fill="#d6dc7e"/>
<rect x="486.74" y="440.66" width="10.80" height="163.99" fill="none" stroke="#eef29a" stroke-width="1"/>
<rect x="485.64" y="439.56" width="13.00" height="165.09" fill="none" stroke="#2a2a2a" stroke-width="1.3"/>
<rect x="498.64" y="378.10" width="13.00" height="226.55" fill="#ffdc7b"/>
<rect x="499.74" y="379.20" width="10.80" height="225.45" fill="none" stroke="#fff0a0" stroke-width="1"/>
<rect x="498.64" y="378.10" width="13.00" height="226.55" fill="none" stroke="#2a2a2a" stroke-width="1.3"/>
<rect x="522.38" y="430.18" width="13.00" height="174.47" fill="#d6dc7e"/>
<rect x="523.48" y="431.28" width="10.80" height="173.37" fill="none" stroke="#eef29a" stroke-width="1"/>
<rect x="522.38" y="430.18" width="13.00" height="174.47" fill="none" stroke="#2a2a2a" stroke-width="1.3"/>
<rect x="535.38" y="449.71" width="13.00" height="154.94" fill="#ffdc7b"/>
<rect x="536.48" y="450.81" width="10.80" height="153.84" fill="none" stroke="#fff0a0" stroke-width="1"/>
<rect x="535.38" y="449.71" width="13.00" height="154.94" fill="none" stroke="#2a2a2a" stroke-width="1.3"/>
<rect x="559.12" y="430.18" width="13.00" height="174.47" fill="#d6dc7e"/>
<rect x="560.22" y="431.28" width="10.80" height="173.37" fill="none" stroke="#eef29a" stroke-width="1"/>
<rect x="559.12" y="430.18" width="13.00" height="174.47" fill="none" stroke="#2a2a2a" stroke-width="1.3"/>
<rect x="572.12" y="446.59" width="13.00" height="158.06" fill="#ffdc7b"/>
<rect x="573.22" y="447.69" width="10.80" height="156.96" fill="none" stroke="#fff0a0" stroke-width="1"/>
<rect x="572.12" y="446.59" width="13.00" height="158.06" fill="none" stroke="#2a2a2a" stroke-width="1.3"/>
<rect x="595.86" y="428.88" width="13.00" height="175.77" fill="#d6dc7e"/>
<rect x="596.96" y="429.98" width="10.80" height="174.67" fill="none" stroke="#eef29a" stroke-width="1"/>
<rect x="595.86" y="428.88" width="13.00" height="175.77" fill="none" stroke="#2a2a2a" stroke-width="1.3"/>
<rect x="608.86" y="446.59" width="13.00" height="158.06" fill="#ffdc7b"/>
<rect x="609.96" y="447.69" width="10.80" height="156.96" fill="none" stroke="#fff0a0" stroke-width="1"/>
<rect x="608.86" y="446.59" width="13.00" height="158.06" fill="none" stroke="#2a2a2a" stroke-width="1.3"/>
<rect x="632.60" y="428.88" width="13.00" height="175.77" fill="#d6dc7e"/>
<rect x="633.70" y="429.98" width="10.80" height="174.67" fill="none" stroke="#eef29a" stroke-width="1"/>
<rect x="632.60" y="428.88" width="13.00" height="175.77" fill="none" stroke="#2a2a2a" stroke-width="1.3"/>
<rect x="645.60" y="441.64" width="13.00" height="163.01" fill="#ffdc7b"/>
<rect x="646.70" y="442.74" width="10.80" height="161.91" fill="none" stroke="#fff0a0" stroke-width="1"/>
<rect x="645.60" y="441.64" width="13.00" height="163.01" fill="none" stroke="#2a2a2a" stroke-width="1.3"/>
<rect x="669.34" y="428.88" width="13.00" height="175.77" fill="#d6dc7e"/>
<rect x="670.44" y="429.98" width="10.80" height="174.67" fill="none" stroke="#eef29a" stroke-width="1"/>
<rect x="669.34" y="428.88" width="13.00" height="175.77" fill="none" stroke="#2a2a2a" stroke-width="1.3"/>
<rect x="682.34" y="446.59" width="13.00" height="158.06" fill="#ffdc7b"/>
<rect x="683.44" y="447.69" width="10.80" height="156.96" fill="none" stroke="#fff0a0" stroke-width="1"/>
<rect x="682.34" y="446.59" width="13.00" height="158.06" fill="none" stroke="#2a2a2a" stroke-width="1.3"/>
<rect x="706.08" y="427.84" width="13.00" height="176.81" fill="#d6dc7e"/>
<rect x="707.18" y="428.94" width="10.80" height="175.71" fill="none" stroke="#eef29a" stroke-width="1"/>
<rect x="706.08" y="427.84" width="13.00" height="176.81" fill="none" stroke="#2a2a2a" stroke-width="1.3"/>
<rect x="719.08" y="446.59" width="13.00" height="158.06" fill="#ffdc7b"/>
<rect x="720.18" y="447.69" width="10.80" height="156.96" fill="none" stroke="#fff0a0" stroke-width="1"/>
<rect x="719.08" y="446.59" width="13.00" height="158.06" fill="none" stroke="#2a2a2a" stroke-width="1.3"/>
<rect x="742.82" y="427.84" width="13.00" height="176.81" fill="#d6dc7e"/>
<rect x="743.92" y="428.94" width="10.80" height="175.71" fill="none" stroke="#eef29a" stroke-width="1"/>
<rect x="742.82" y="427.84" width="13.00" height="176.81" fill="none" stroke="#2a2a2a" stroke-width="1.3"/>
<rect x="755.82" y="441.64" width="13.00" height="163.01" fill="#ffdc7b"/>
<rect x="756.92" y="442.74" width="10.80" height="161.91" fill="none" stroke="#fff0a0" stroke-width="1"/>
<rect x="755.82" y="441.64" width="13.00" height="163.01" fill="none" stroke="#2a2a2a" stroke-width="1.3"/>
<rect x="779.56" y="422.63" width="13.00" height="182.02" fill="#d6dc7e"/>
<rect x="780.66" y="423.73" width="10.80" height="180.92" fill="none" stroke="#eef29a" stroke-width="1"/>
<rect x="779.56" y="422.63" width="13.00" height="182.02" fill="none" stroke="#2a2a2a" stroke-width="1.3"/>
<rect x="792.56" y="441.64" width="13.00" height="163.01" fill="#ffdc7b"/>
<rect x="793.66" y="442.74" width="10.80" height="161.91" fill="none" stroke="#fff0a0" stroke-width="1"/>
<rect x="792.56" y="441.64" width="13.00" height="163.01" fill="none" stroke="#2a2a2a" stroke-width="1.3"/>
<rect x="816.30" y="422.63" width="13.00" height="182.02" fill="#d6dc7e"/>
<rect x="817.40" y="423.73" width="10.80" height="180.92" fill="none" stroke="#eef29a" stroke-width="1"/>
<rect x="816.30" y="422.63" width="13.00" height="182.02" fill="none" stroke="#2a2a2a" stroke-width="1.3"/>
<rect x="829.30" y="412.74" width="13.00" height="191.91" fill="#ffdc7b"/>
<rect x="830.40" y="413.84" width="10.80" height="190.81" fill="none" stroke="#fff0a0" stroke-width="1"/>
<rect x="829.30" y="412.74" width="13.00" height="191.91" fill="none" stroke="#2a2a2a" stroke-width="1.3"/>
<rect x="853.04" y="422.63" width="13.00" height="182.02" fill="#d6dc7e"/>
<rect x="854.14" y="423.73" width="10.80" height="180.92" fill="none" stroke="#eef29a" stroke-width="1"/>
<rect x="853.04" y="422.63" width="13.00" height="182.02" fill="none" stroke="#2a2a2a" stroke-width="1.3"/>
<rect x="866.04" y="446.59" width="13.00" height="158.06" fill="#ffdc7b"/>
<rect x="867.14" y="447.69" width="10.80" height="156.96" fill="none" stroke="#fff0a0" stroke-width="1"/>
<rect x="866.04" y="446.59" width="13.00" height="158.06" fill="none" stroke="#2a2a2a" stroke-width="1.3"/>
<rect x="889.78" y="421.85" width="13.00" height="182.80" fill="#d6dc7e"/>
<rect x="890.88" y="422.95" width="10.80" height="181.70" fill="none" stroke="#eef29a" stroke-width="1"/>
<rect x="889.78" y="421.85" width="13.00" height="182.80" fill="none" stroke="#2a2a2a" stroke-width="1.3"/>
<rect x="902.78" y="441.64" width="13.00" height="163.01" fill="#ffdc7b"/>
<rect x="903.88" y="442.74" width="10.80" height="161.91" fill="none" stroke="#fff0a0" stroke-width="1"/>
<rect x="902.78" y="441.64" width="13.00" height="163.01" fill="none" stroke="#2a2a2a" stroke-width="1.3"/>
<rect x="926.52" y="421.85" width="13.00" height="182.80" fill="#d6dc7e"/>
<rect x="927.62" y="422.95" width="10.80" height="181.70" fill="none" stroke="#eef29a" stroke-width="1"/>
<rect x="926.52" y="421.85" width="13.00" height="182.80" fill="none" stroke="#2a2a2a" stroke-width="1.3"/>
<rect x="939.52" y="446.59" width="13.00" height="158.06" fill="#ffdc7b"/>
<rect x="940.62" y="447.69" width="10.80" height="156.96" fill="none" stroke="#fff0a0" stroke-width="1"/>
<rect x="939.52" y="446.59" width="13.00" height="158.06" fill="none" stroke="#2a2a2a" stroke-width="1.3"/>
<rect x="963.26" y="417.16" width="13.00" height="187.49" fill="#d6dc7e"/>
<rect x="964.36" y="418.26" width="10.80" height="186.39" fill="none" stroke="#eef29a" stroke-width="1"/>
<rect x="963.26" y="417.16" width="13.00" height="187.49" fill="none" stroke="#2a2a2a" stroke-width="1.3"/>
<rect x="976.26" y="441.64" width="13.00" height="163.01" fill="#ffdc7b"/>
<rect x="977.36" y="442.74" width="10.80" height="161.91" fill="none" stroke="#fff0a0" stroke-width="1"/>
<rect x="976.26" y="441.64" width="13.00" height="163.01" fill="none" stroke="#2a2a2a" stroke-width="1.3"/>
<rect x="1000.00" y="414.82" width="13.00" height="189.83" fill="#d6dc7e"/>
<rect x="1001.10" y="415.92" width="10.80" height="188.73" fill="none" stroke="#eef29a" stroke-width="1"/>
<rect x="1000.00" y="414.82" width="13.00" height="189.83" fill="none" stroke="#2a2a2a" stroke-width="1.3"/>
<rect x="1013.00" y="412.74" width="13.00" height="191.91" fill="#ffdc7b"/>
<rect x="1014.10" y="413.84" width="10.80" height="190.81" fill="none" stroke="#fff0a0" stroke-width="1"/>
<rect x="1013.00" y="412.74" width="13.00" height="191.91" fill="none" stroke="#2a2a2a" stroke-width="1.3"/>
<rect x="1036.74" y="414.82" width="13.00" height="189.83" fill="#d6dc7e"/>
<rect x="1037.84" y="415.92" width="10.80" height="188.73" fill="none" stroke="#eef29a" stroke-width="1"/>
<rect x="1036.74" y="414.82" width="13.00" height="189.83" fill="none" stroke="#2a2a2a" stroke-width="1.3"/>
<rect x="1049.74" y="415.86" width="13.00" height="188.79" fill="#ffdc7b"/>
<rect x="1050.84" y="416.96" width="10.80" height="187.69" fill="none" stroke="#fff0a0" stroke-width="1"/>
<rect x="1049.74" y="415.86" width="13.00" height="188.79" fill="none" stroke="#2a2a2a" stroke-width="1.3"/>
<rect x="1073.48" y="408.83" width="13.00" height="195.82" fill="#d6dc7e"/>
<rect x="1074.58" y="409.93" width="10.80" height="194.72" fill="none" stroke="#eef29a" stroke-width="1"/>
<rect x="1073.48" y="408.83" width="13.00" height="195.82" fill="none" stroke="#2a2a2a" stroke-width="1.3"/>
<rect x="1086.48" y="415.86" width="13.00" height="188.79" fill="#ffdc7b"/>
<rect x="1087.58" y="416.96" width="10.80" height="187.69" fill="none" stroke="#fff0a0" stroke-width="1"/>
<rect x="1086.48" y="415.86" width="13.00" height="188.79" fill="none" stroke="#2a2a2a" stroke-width="1.3"/>
<rect x="1110.22" y="408.83" width="13.00" height="195.82" fill="#d6dc7e"/>
<rect x="1111.32" y="409.93" width="10.80" height="194.72" fill="none" stroke="#eef29a" stroke-width="1"/>
<rect x="1110.22" y="408.83" width="13.00" height="195.82" fill="none" stroke="#2a2a2a" stroke-width="1.3"/>
<rect x="1123.22" y="412.74" width="13.00" height="191.91" fill="#ffdc7b"/>
<rect x="1124.32" y="413.84" width="10.80" height="190.81" fill="none" stroke="#fff0a0" stroke-width="1"/>
<rect x="1123.22" y="412.74" width="13.00" height="191.91" fill="none" stroke="#2a2a2a" stroke-width="1.3"/>
<rect x="1146.96" y="408.05" width="13.00" height="196.60" fill="#d6dc7e"/>
<rect x="1148.06" y="409.15" width="10.80" height="195.50" fill="none" stroke="#eef29a" stroke-width="1"/>
<rect x="1146.96" y="408.05" width="13.00" height="196.60" fill="none" stroke="#2a2a2a" stroke-width="1.3"/>
<rect x="1159.96" y="415.86" width="13.00" height="188.79" fill="#ffdc7b"/>
<rect x="1161.06" y="416.96" width="10.80" height="187.69" fill="none" stroke="#fff0a0" stroke-width="1"/>
<rect x="1159.96" y="415.86" width="13.00" height="188.79" fill="none" stroke="#2a2a2a" stroke-width="1.3"/>
<rect x="1183.70" y="408.05" width="13.00" height="196.60" fill="#d6dc7e"/>
<rect x="1184.80" y="409.15" width="10.80" height="195.50" fill="none" stroke="#eef29a" stroke-width="1"/>
<rect x="1183.70" y="408.05" width="13.00" height="196.60" fill="none" stroke="#2a2a2a" stroke-width="1.3"/>
<rect x="1196.70" y="412.74" width="13.00" height="191.91" fill="#ffdc7b"/>
<rect x="1197.80" y="413.84" width="10.80" height="190.81" fill="none" stroke="#fff0a0" stroke-width="1"/>
<rect x="1196.70" y="412.74" width="13.00" height="191.91" fill="none" stroke="#2a2a2a" stroke-width="1.3"/>
<rect x="1220.44" y="408.05" width="13.00" height="196.60" fill="#d6dc7e"/>
<rect x="1221.54" y="409.15" width="10.80" height="195.50" fill="none" stroke="#eef29a" stroke-width="1"/>
<rect x="1220.44" y="408.05" width="13.00" height="196.60" fill="none" stroke="#2a2a2a" stroke-width="1.3"/>
<rect x="1233.44" y="407.01" width="13.00" height="197.64" fill="#ffdc7b"/>
<rect x="1234.54" y="408.11" width="10.80" height="196.54" fill="none" stroke="#fff0a0" stroke-width="1"/>
<rect x="1233.44" y="407.01" width="13.00" height="197.64" fill="none" stroke="#2a2a2a" stroke-width="1.3"/>
<rect x="1257.18" y="407.01" width="13.00" height="197.64" fill="#d6dc7e"/>
<rect x="1258.28" y="408.11" width="10.80" height="196.54" fill="none" stroke="#eef29a" stroke-width="1"/>
<rect x="1257.18" y="407.01" width="13.00" height="197.64" fill="none" stroke="#2a2a2a" stroke-width="1.3"/>
<rect x="1270.18" y="412.74" width="13.00" height="191.91" fill="#ffdc7b"/>
<rect x="1271.28" y="413.84" width="10.80" height="190.81" fill="none" stroke="#fff0a0" stroke-width="1"/>
<rect x="1270.18" y="412.74" width="13.00" height="191.91" fill="none" stroke="#2a2a2a" stroke-width="1.3"/>
<rect x="1293.92" y="402.06" width="13.00" height="202.59" fill="#d6dc7e"/>
<rect x="1295.02" y="403.16" width="10.80" height="201.49" fill="none" stroke="#eef29a" stroke-width="1"/>
<rect x="1293.92" y="402.06" width="13.00" height="202.59" fill="none" stroke="#2a2a2a" stroke-width="1.3"/>
<rect x="1306.92" y="407.01" width="13.00" height="197.64" fill="#ffdc7b"/>
<rect x="1308.02" y="408.11" width="10.80" height="196.54" fill="none" stroke="#fff0a0" stroke-width="1"/>
<rect x="1306.92" y="407.01" width="13.00" height="197.64" fill="none" stroke="#2a2a2a" stroke-width="1.3"/>
<rect x="1330.66" y="401.02" width="13.00" height="203.63" fill="#d6dc7e"/>
<rect x="1331.76" y="402.12" width="10.80" height="202.53" fill="none" stroke="#eef29a" stroke-width="1"/>
<rect x="1330.66" y="401.02" width="13.00" height="203.63" fill="none" stroke="#2a2a2a" stroke-width="1.3"/>
<rect x="1343.66" y="412.74" width="13.00" height="191.91" fill="#ffdc7b"/>
<rect x="1344.76" y="413.84" width="10.80" height="190.81" fill="none" stroke="#fff0a0" stroke-width="1"/>
<rect x="1343.66" y="412.74" width="13.00" height="191.91" fill="none" stroke="#2a2a2a" stroke-width="1.3"/>
<rect x="1367.40" y="395.03" width="13.00" height="209.62" fill="#d6dc7e"/>
<rect x="1368.50" y="396.13" width="10.80" height="208.52" fill="none" stroke="#eef29a" stroke-width="1"/>
<rect x="1367.40" y="395.03" width="13.00" height="209.62" fill="none" stroke="#2a2a2a" stroke-width="1.3"/>
<rect x="1380.40" y="407.01" width="13.00" height="197.64" fill="#ffdc7b"/>
<rect x="1381.50" y="408.11" width="10.80" height="196.54" fill="none" stroke="#fff0a0" stroke-width="1"/>
<rect x="1380.40" y="407.01" width="13.00" height="197.64" fill="none" stroke="#2a2a2a" stroke-width="1.3"/>
<rect x="1404.14" y="380.19" width="13.00" height="224.46" fill="#d6dc7e"/>
<rect x="1405.24" y="381.29" width="10.80" height="223.36" fill="none" stroke="#eef29a" stroke-width="1"/>
<rect x="1404.14" y="380.19" width="13.00" height="224.46" fill="none" stroke="#2a2a2a" stroke-width="1.3"/>
<rect x="1417.14" y="366.90" width="13.00" height="237.75" fill="#ffdc7b"/>
<rect x="1418.24" y="368.00" width="10.80" height="236.65" fill="none" stroke="#fff0a0" stroke-width="1"/>
<rect x="1417.14" y="366.90" width="13.00" height="237.75" fill="none" stroke="#2a2a2a" stroke-width="1.3"/>
<rect x="1440.88" y="369.25" width="13.00" height="235.40" fill="#d6dc7e"/>
<rect x="1441.98" y="370.35" width="10.80" height="234.30" fill="none" stroke="#eef29a" stroke-width="1"/>
<rect x="1440.88" y="369.25" width="13.00" height="235.40" fill="none" stroke="#2a2a2a" stroke-width="1.3"/>
<rect x="1453.88" y="370.29" width="13.00" height="234.36" fill="#ffdc7b"/>
<rect x="1454.98" y="371.39" width="10.80" height="233.26" fill="none" stroke="#fff0a0" stroke-width="1"/>
<rect x="1453.88" y="370.29" width="13.00" height="234.36" fill="none" stroke="#2a2a2a" stroke-width="1.3"/>
<rect x="1477.62" y="366.12" width="13.00" height="238.53" fill="#d6dc7e"/>
<rect x="1478.72" y="367.22" width="10.80" height="237.43" fill="none" stroke="#eef29a" stroke-width="1"/>
<rect x="1477.62" y="366.12" width="13.00" height="238.53" fill="none" stroke="#2a2a2a" stroke-width="1.3"/>
<rect x="1490.62" y="370.29" width="13.00" height="234.36" fill="#ffdc7b"/>
<rect x="1491.72" y="371.39" width="10.80" height="233.26" fill="none" stroke="#fff0a0" stroke-width="1"/>
<rect x="1490.62" y="370.29" width="13.00" height="234.36" fill="none" stroke="#2a2a2a" stroke-width="1.3"/>
<rect x="1514.36" y="365.08" width="13.00" height="239.57" fill="#d6dc7e"/>
<rect x="1515.46" y="366.18" width="10.80" height="238.47" fill="none" stroke="#eef29a" stroke-width="1"/>
<rect x="1514.36" y="365.08" width="13.00" height="239.57" fill="none" stroke="#2a2a2a" stroke-width="1.3"/>
<rect x="1527.36" y="364.04" width="13.00" height="240.61" fill="#ffdc7b"/>
<rect x="1528.46" y="365.14" width="10.80" height="239.51" fill="none" stroke="#fff0a0" stroke-width="1"/>
<rect x="1527.36" y="364.04" width="13.00" height="240.61" fill="none" stroke="#2a2a2a" stroke-width="1.3"/>
<rect x="1551.10" y="365.34" width="13.00" height="239.31" fill="#d6dc7e"/>
<rect x="1552.20" y="366.44" width="10.80" height="238.21" fill="none" stroke="#eef29a" stroke-width="1"/>
<rect x="1551.10" y="365.34" width="13.00" height="239.31" fill="none" stroke="#2a2a2a" stroke-width="1.3"/>
<rect x="1564.10" y="367.17" width="13.00" height="237.48" fill="#ffdc7b"/>
<rect x="1565.20" y="368.27" width="10.80" height="236.38" fill="none" stroke="#fff0a0" stroke-width="1"/>
<rect x="1564.10" y="367.17" width="13.00" height="237.48" fill="none" stroke="#2a2a2a" stroke-width="1.3"/>
<rect x="1587.84" y="365.34" width="13.00" height="239.31" fill="#d6dc7e"/>
<rect x="1588.94" y="366.44" width="10.80" height="238.21" fill="none" stroke="#eef29a" stroke-width="1"/>
<rect x="1587.84" y="365.34" width="13.00" height="239.31" fill="none" stroke="#2a2a2a" stroke-width="1.3"/>
<rect x="1600.84" y="367.17" width="13.00" height="237.48" fill="#ffdc7b"/>
<rect x="1601.94" y="368.27" width="10.80" height="236.38" fill="none" stroke="#fff0a0" stroke-width="1"/>
<rect x="1600.84" y="367.17" width="13.00" height="237.48" fill="none" stroke="#2a2a2a" stroke-width="1.3"/>
<rect x="1624.58" y="361.44" width="13.00" height="243.21" fill="#d6dc7e"/>
<rect x="1625.68" y="362.54" width="10.80" height="242.11" fill="none" stroke="#eef29a" stroke-width="1"/>
<rect x="1624.58" y="361.44" width="13.00" height="243.21" fill="none" stroke="#2a2a2a" stroke-width="1.3"/>
<rect x="1637.58" y="367.17" width="13.00" height="237.48" fill="#ffdc7b"/>
<rect x="1638.68" y="368.27" width="10.80" height="236.38" fill="none" stroke="#fff0a0" stroke-width="1"/>
<rect x="1637.58" y="367.17" width="13.00" height="237.48" fill="none" stroke="#2a2a2a" stroke-width="1.3"/>
<rect x="1661.32" y="361.44" width="13.00" height="243.21" fill="#d6dc7e"/>
<rect x="1662.42" y="362.54" width="10.80" height="242.11" fill="none" stroke="#eef29a" stroke-width="1"/>
<rect x="1661.32" y="361.44" width="13.00" height="243.21" fill="none" stroke="#2a2a2a" stroke-width="1.3"/>
<rect x="1674.32" y="364.04" width="13.00" height="240.61" fill="#ffdc7b"/>
<rect x="1675.42" y="365.14" width="10.80" height="239.51" fill="none" stroke="#fff0a0" stroke-width="1"/>
<rect x="1674.32" y="364.04" width="13.00" height="240.61" fill="none" stroke="#2a2a2a" stroke-width="1.3"/>
<rect x="1698.06" y="357.27" width="13.00" height="247.38" fill="#d6dc7e"/>
<rect x="1699.16" y="358.37" width="10.80" height="246.28" fill="none" stroke="#eef29a" stroke-width="1"/>
<rect x="1698.06" y="357.27" width="13.00" height="247.38" fill="none" stroke="#2a2a2a" stroke-width="1.3"/>
<rect x="1711.06" y="355.71" width="13.00" height="248.94" fill="#ffdc7b"/>
<rect x="1712.16" y="356.81" width="10.80" height="247.84" fill="none" stroke="#fff0a0" stroke-width="1"/>
<rect x="1711.06" y="355.71" width="13.00" height="248.94" fill="none" stroke="#2a2a2a" stroke-width="1.3"/>
<rect x="1734.80" y="354.41" width="13.00" height="250.24" fill="#d6dc7e"/>
<rect x="1735.90" y="355.51" width="10.80" height="249.14" fill="none" stroke="#eef29a" stroke-width="1"/>
<rect x="1734.80" y="354.41" width="13.00" height="250.24" fill="none" stroke="#2a2a2a" stroke-width="1.3"/>
<rect x="1747.80" y="355.71" width="13.00" height="248.94" fill="#ffdc7b"/>
<rect x="1748.90" y="356.81" width="10.80" height="247.84" fill="none" stroke="#fff0a0" stroke-width="1"/>
<rect x="1747.80" y="355.71" width="13.00" height="248.94" fill="none" stroke="#2a2a2a" stroke-width="1.3"/>
<rect x="1771.54" y="351.28" width="13.00" height="253.37" fill="#d6dc7e"/>
<rect x="1772.64" y="352.38" width="10.80" height="252.27" fill="none" stroke="#eef29a" stroke-width="1"/>
<rect x="1771.54" y="351.28" width="13.00" height="253.37" fill="none" stroke="#2a2a2a" stroke-width="1.3"/>
<rect x="1784.54" y="364.04" width="13.00" height="240.61" fill="#ffdc7b"/>
<rect x="1785.64" y="365.14" width="10.80" height="239.51" fill="none" stroke="#fff0a0" stroke-width="1"/>
<rect x="1784.54" y="364.04" width="13.00" height="240.61" fill="none" stroke="#2a2a2a" stroke-width="1.3"/>
<rect x="1808.28" y="351.28" width="13.00" height="253.37" fill="#d6dc7e"/>
<rect x="1809.38" y="352.38" width="10.80" height="252.27" fill="none" stroke="#eef29a" stroke-width="1"/>
<rect x="1808.28" y="351.28" width="13.00" height="253.37" fill="none" stroke="#2a2a2a" stroke-width="1.3"/>
<rect x="1821.28" y="353.62" width="13.00" height="251.03" fill="#ffdc7b"/>
<rect x="1822.38" y="354.72" width="10.80" height="249.93" fill="none" stroke="#fff0a0" stroke-width="1"/>
<rect x="1821.28" y="353.62" width="13.00" height="251.03" fill="none" stroke="#2a2a2a" stroke-width="1.3"/>
<line x1="62.9" y1="343.8" x2="62.9" y2="605.2" stroke="#222" stroke-width="1.3"/>
<line x1="59.4" y1="604.6" x2="1853.0" y2="604.6" stroke="#222" stroke-width="1.3"/>
<line x1="59.4" y1="604.65" x2="62.9" y2="604.65" stroke="#222" stroke-width="1"/>
<text x="53.5" y="609.55" font-size="14.2" text-anchor="end" fill="#111" textLength="17.3" lengthAdjust="spacingAndGlyphs">0.0</text>
<line x1="59.4" y1="578.61" x2="62.9" y2="578.61" stroke="#222" stroke-width="1"/>
<text x="53.5" y="583.51" font-size="14.2" text-anchor="end" fill="#111" textLength="17.3" lengthAdjust="spacingAndGlyphs">0.1</text>
<line x1="59.4" y1="552.57" x2="62.9" y2="552.57" stroke="#222" stroke-width="1"/>
<text x="53.5" y="557.47" font-size="14.2" text-anchor="end" fill="#111" textLength="17.3" lengthAdjust="spacingAndGlyphs">0.2</text>
<line x1="59.4" y1="526.53" x2="62.9" y2="526.53" stroke="#222" stroke-width="1"/>
<text x="53.5" y="531.43" font-size="14.2" text-anchor="end" fill="#111" textLength="17.3" lengthAdjust="spacingAndGlyphs">0.3</text>
<line x1="59.4" y1="500.49" x2="62.9" y2="500.49" stroke="#222" stroke-width="1"/>
<text x="53.5" y="505.39" font-size="14.2" text-anchor="end" fill="#111" textLength="17.3" lengthAdjust="spacingAndGlyphs">0.4</text>
<line x1="59.4" y1="474.45" x2="62.9" y2="474.45" stroke="#222" stroke-width="1"/>
<text x="53.5" y="479.35" font-size="14.2" text-anchor="end" fill="#111" textLength="17.3" lengthAdjust="spacingAndGlyphs">0.5</text>
<line x1="59.4" y1="448.41" x2="62.9" y2="448.41" stroke="#222" stroke-width="1"/>
<text x="53.5" y="453.31" font-size="14.2" text-anchor="end" fill="#111" textLength="17.3" lengthAdjust="spacingAndGlyphs">0.6</text>
<line x1="59.4" y1="422.37" x2="62.9" y2="422.37" stroke="#222" stroke-width="1"/>
<text x="53.5" y="427.27" font-size="14.2" text-anchor="end" fill="#111" textLength="17.3" lengthAdjust="spacingAndGlyphs">0.7</text>
<line x1="59.4" y1="396.33" x2="62.9" y2="396.33" stroke="#222" stroke-width="1"/>
<text x="53.5" y="401.23" font-size="14.2" text-anchor="end" fill="#111" textLength="17.3" lengthAdjust="spacingAndGlyphs">0.8</text>
<line x1="59.4" y1="370.29" x2="62.9" y2="370.29" stroke="#222" stroke-width="1"/>
<text x="53.5" y="375.19" font-size="14.2" text-anchor="end" fill="#111" textLength="17.3" lengthAdjust="spacingAndGlyphs">0.9</text>
<line x1="59.4" y1="344.25" x2="62.9" y2="344.25" stroke="#222" stroke-width="1"/>
<text x="53.5" y="349.15" font-size="14.2" text-anchor="end" fill="#111" textLength="17.3" lengthAdjust="spacingAndGlyphs">1.0</text>
<line x1="94.50" y1="604.6" x2="94.50" y2="608.2" stroke="#222" stroke-width="1"/>
<text x="94.50" y="625.5" font-size="14.2" text-anchor="middle" fill="#111" textLength="7.0" lengthAdjust="spacingAndGlyphs">2</text>
<line x1="131.24" y1="604.6" x2="131.24" y2="608.2" stroke="#222" stroke-width="1"/>
<text x="131.24" y="625.5" font-size="14.2" text-anchor="middle" fill="#111" textLength="7.0" lengthAdjust="spacingAndGlyphs">3</text>
<line x1="167.98" y1="604.6" x2="167.98" y2="608.2" stroke="#222" stroke-width="1"/>
<text x="167.98" y="625.5" font-size="14.2" text-anchor="middle" fill="#111" textLength="14.1" lengthAdjust="spacingAndGlyphs">26</text>
<line x1="204.72" y1="604.6" x2="204.72" y2="608.2" stroke="#222" stroke-width="1"/>
<text x="204.72" y="625.5" font-size="14.2" text-anchor="middle" fill="#111" textLength="14.1" lengthAdjust="spacingAndGlyphs">27</text>
<line x1="241.46" y1="604.6" x2="241.46" y2="608.2" stroke="#222" stroke-width="1"/>
<text x="241.46" y="625.5" font-size="14.2" text-anchor="middle" fill="#111" textLength="14.1" lengthAdjust="spacingAndGlyphs">10</text>
<line x1="278.20" y1="604.6" x2="278.20" y2="608.2" stroke="#222" stroke-width="1"/>
<text x="278.20" y="625.5" font-size="14.2" text-anchor="middle" fill="#111" textLength="14.1" lengthAdjust="spacingAndGlyphs">11</text>
<line x1="314.94" y1="604.6" x2="314.94" y2="608.2" stroke="#222" stroke-width="1"/>
<text x="314.94" y="625.5" font-size="14.2" text-anchor="middle" fill="#111" textLength="14.1" lengthAdjust="spacingAndGlyphs">34</text>
<line x1="351.68" y1="604.6" x2="351.68" y2="608.2" stroke="#222" stroke-width="1"/>
<text x="351.68" y="625.5" font-size="14.2" text-anchor="middle" fill="#111" textLength="7.0" lengthAdjust="spacingAndGlyphs">1</text>
<line x1="388.42" y1="604.6" x2="388.42" y2="608.2" stroke="#222" stroke-width="1"/>
<text x="388.42" y="625.5" font-size="14.2" text-anchor="middle" fill="#111" textLength="14.1" lengthAdjust="spacingAndGlyphs">18</text>
<line x1="425.16" y1="604.6" x2="425.16" y2="608.2" stroke="#222" stroke-width="1"/>
<text x="425.16" y="625.5" font-size="14.2" text-anchor="middle" fill="#111" textLength="14.1" lengthAdjust="spacingAndGlyphs">19</text>
<line x1="461.90" y1="604.6" x2="461.90" y2="608.2" stroke="#222" stroke-width="1"/>
<text x="461.90" y="625.5" font-size="14.2" text-anchor="middle" fill="#111" textLength="14.1" lengthAdjust="spacingAndGlyphs">41</text>
<line x1="498.64" y1="604.6" x2="498.64" y2="608.2" stroke="#222" stroke-width="1"/>
<text x="498.64" y="625.5" font-size="14.2" text-anchor="middle" fill="#111" textLength="14.1" lengthAdjust="spacingAndGlyphs">42</text>
<line x1="535.38" y1="604.6" x2="535.38" y2="608.2" stroke="#222" stroke-width="1"/>
<text x="535.38" y="625.5" font-size="14.2" text-anchor="middle" fill="#111" textLength="7.0" lengthAdjust="spacingAndGlyphs">4</text>
<line x1="572.12" y1="604.6" x2="572.12" y2="608.2" stroke="#222" stroke-width="1"/>
<text x="572.12" y="625.5" font-size="14.2" text-anchor="middle" fill="#111" textLength="7.0" lengthAdjust="spacingAndGlyphs">5</text>
<line x1="608.86" y1="604.6" x2="608.86" y2="608.2" stroke="#222" stroke-width="1"/>
<text x="608.86" y="625.5" font-size="14.2" text-anchor="middle" fill="#111" textLength="7.0" lengthAdjust="spacingAndGlyphs">6</text>
<line x1="645.60" y1="604.6" x2="645.60" y2="608.2" stroke="#222" stroke-width="1"/>
<text x="645.60" y="625.5" font-size="14.2" text-anchor="middle" fill="#111" textLength="7.0" lengthAdjust="spacingAndGlyphs">7</text>
<line x1="682.34" y1="604.6" x2="682.34" y2="608.2" stroke="#222" stroke-width="1"/>
<text x="682.34" y="625.5" font-size="14.2" text-anchor="middle" fill="#111" textLength="14.1" lengthAdjust="spacingAndGlyphs">30</text>
<line x1="719.08" y1="604.6" x2="719.08" y2="608.2" stroke="#222" stroke-width="1"/>
<text x="719.08" y="625.5" font-size="14.2" text-anchor="middle" fill="#111" textLength="7.0" lengthAdjust="spacingAndGlyphs">8</text>
<line x1="755.82" y1="604.6" x2="755.82" y2="608.2" stroke="#222" stroke-width="1"/>
<text x="755.82" y="625.5" font-size="14.2" text-anchor="middle" fill="#111" textLength="14.1" lengthAdjust="spacingAndGlyphs">29</text>
<line x1="792.56" y1="604.6" x2="792.56" y2="608.2" stroke="#222" stroke-width="1"/>
<text x="792.56" y="625.5" font-size="14.2" text-anchor="middle" fill="#111" textLength="7.0" lengthAdjust="spacingAndGlyphs">9</text>
<line x1="829.30" y1="604.6" x2="829.30" y2="608.2" stroke="#222" stroke-width="1"/>
<text x="829.30" y="625.5" font-size="14.2" text-anchor="middle" fill="#111" textLength="14.1" lengthAdjust="spacingAndGlyphs">15</text>
<line x1="866.04" y1="604.6" x2="866.04" y2="608.2" stroke="#222" stroke-width="1"/>
<text x="866.04" y="625.5" font-size="14.2" text-anchor="middle" fill="#111" textLength="14.1" lengthAdjust="spacingAndGlyphs">28</text>
<line x1="902.78" y1="604.6" x2="902.78" y2="608.2" stroke="#222" stroke-width="1"/>
<text x="902.78" y="625.5" font-size="14.2" text-anchor="middle" fill="#111" textLength="14.1" lengthAdjust="spacingAndGlyphs">31</text>
<line x1="939.52" y1="604.6" x2="939.52" y2="608.2" stroke="#222" stroke-width="1"/>
<text x="939.52" y="625.5" font-size="14.2" text-anchor="middle" fill="#111" textLength="14.1" lengthAdjust="spacingAndGlyphs">32</text>
<line x1="976.26" y1="604.6" x2="976.26" y2="608.2" stroke="#222" stroke-width="1"/>
<text x="976.26" y="625.5" font-size="14.2" text-anchor="middle" fill="#111" textLength="14.1" lengthAdjust="spacingAndGlyphs">33</text>
<line x1="1013.00" y1="604.6" x2="1013.00" y2="608.2" stroke="#222" stroke-width="1"/>
<text x="1013.00" y="625.5" font-size="14.2" text-anchor="middle" fill="#111" textLength="14.1" lengthAdjust="spacingAndGlyphs">13</text>
<line x1="1049.74" y1="604.6" x2="1049.74" y2="608.2" stroke="#222" stroke-width="1"/>
<text x="1049.74" y="625.5" font-size="14.2" text-anchor="middle" fill="#111" textLength="14.1" lengthAdjust="spacingAndGlyphs">14</text>
<line x1="1086.48" y1="604.6" x2="1086.48" y2="608.2" stroke="#222" stroke-width="1"/>
<text x="1086.48" y="625.5" font-size="14.2" text-anchor="middle" fill="#111" textLength="14.1" lengthAdjust="spacingAndGlyphs">12</text>
<line x1="1123.22" y1="604.6" x2="1123.22" y2="608.2" stroke="#222" stroke-width="1"/>
<text x="1123.22" y="625.5" font-size="14.2" text-anchor="middle" fill="#111" textLength="14.1" lengthAdjust="spacingAndGlyphs">37</text>
<line x1="1159.96" y1="604.6" x2="1159.96" y2="608.2" stroke="#222" stroke-width="1"/>
<text x="1159.96" y="625.5" font-size="14.2" text-anchor="middle" fill="#111" textLength="14.1" lengthAdjust="spacingAndGlyphs">35</text>
<line x1="1196.70" y1="604.6" x2="1196.70" y2="608.2" stroke="#222" stroke-width="1"/>
<text x="1196.70" y="625.5" font-size="14.2" text-anchor="middle" fill="#111" textLength="14.1" lengthAdjust="spacingAndGlyphs">36</text>
<line x1="1233.44" y1="604.6" x2="1233.44" y2="608.2" stroke="#222" stroke-width="1"/>
<text x="1233.44" y="625.5" font-size="14.2" text-anchor="middle" fill="#111" textLength="14.1" lengthAdjust="spacingAndGlyphs">38</text>
<line x1="1270.18" y1="604.6" x2="1270.18" y2="608.2" stroke="#222" stroke-width="1"/>
<text x="1270.18" y="625.5" font-size="14.2" text-anchor="middle" fill="#111" textLength="14.1" lengthAdjust="spacingAndGlyphs">16</text>
<line x1="1306.92" y1="604.6" x2="1306.92" y2="608.2" stroke="#222" stroke-width="1"/>
<text x="1306.92" y="625.5" font-size="14.2" text-anchor="middle" fill="#111" textLength="14.1" lengthAdjust="spacingAndGlyphs">17</text>
<line x1="1343.66" y1="604.6" x2="1343.66" y2="608.2" stroke="#222" stroke-width="1"/>
<text x="1343.66" y="625.5" font-size="14.2" text-anchor="middle" fill="#111" textLength="14.1" lengthAdjust="spacingAndGlyphs">39</text>
<line x1="1380.40" y1="604.6" x2="1380.40" y2="608.2" stroke="#222" stroke-width="1"/>
<text x="1380.40" y="625.5" font-size="14.2" text-anchor="middle" fill="#111" textLength="14.1" lengthAdjust="spacingAndGlyphs">40</text>
<line x1="1417.14" y1="604.6" x2="1417.14" y2="608.2" stroke="#222" stroke-width="1"/>
<text x="1417.14" y="625.5" font-size="14.2" text-anchor="middle" fill="#111" textLength="14.1" lengthAdjust="spacingAndGlyphs">20</text>
<line x1="1453.88" y1="604.6" x2="1453.88" y2="608.2" stroke="#222" stroke-width="1"/>
<text x="1453.88" y="625.5" font-size="14.2" text-anchor="middle" fill="#111" textLength="14.1" lengthAdjust="spacingAndGlyphs">21</text>
<line x1="1490.62" y1="604.6" x2="1490.62" y2="608.2" stroke="#222" stroke-width="1"/>
<text x="1490.62" y="625.5" font-size="14.2" text-anchor="middle" fill="#111" textLength="14.1" lengthAdjust="spacingAndGlyphs">44</text>
<line x1="1527.36" y1="604.6" x2="1527.36" y2="608.2" stroke="#222" stroke-width="1"/>
<text x="1527.36" y="625.5" font-size="14.2" text-anchor="middle" fill="#111" textLength="14.1" lengthAdjust="spacingAndGlyphs">45</text>
<line x1="1564.10" y1="604.6" x2="1564.10" y2="608.2" stroke="#222" stroke-width="1"/>
<text x="1564.10" y="625.5" font-size="14.2" text-anchor="middle" fill="#111" textLength="14.1" lengthAdjust="spacingAndGlyphs">22</text>
<line x1="1600.84" y1="604.6" x2="1600.84" y2="608.2" stroke="#222" stroke-width="1"/>
<text x="1600.84" y="625.5" font-size="14.2" text-anchor="middle" fill="#111" textLength="14.1" lengthAdjust="spacingAndGlyphs">23</text>
<line x1="1637.58" y1="604.6" x2="1637.58" y2="608.2" stroke="#222" stroke-width="1"/>
<text x="1637.58" y="625.5" font-size="14.2" text-anchor="middle" fill="#111" textLength="14.1" lengthAdjust="spacingAndGlyphs">46</text>
<line x1="1674.32" y1="604.6" x2="1674.32" y2="608.2" stroke="#222" stroke-width="1"/>
<text x="1674.32" y="625.5" font-size="14.2" text-anchor="middle" fill="#111" textLength="14.1" lengthAdjust="spacingAndGlyphs">47</text>
<line x1="1711.06" y1="604.6" x2="1711.06" y2="608.2" stroke="#222" stroke-width="1"/>
<text x="1711.06" y="625.5" font-size="14.2" text-anchor="middle" fill="#111" textLength="14.1" lengthAdjust="spacingAndGlyphs">24</text>
<line x1="1747.80" y1="604.6" x2="1747.80" y2="608.2" stroke="#222" stroke-width="1"/>
<text x="1747.80" y="625.5" font-size="14.2" text-anchor="middle" fill="#111" textLength="14.1" lengthAdjust="spacingAndGlyphs">25</text>
<line x1="1784.54" y1="604.6" x2="1784.54" y2="608.2" stroke="#222" stroke-width="1"/>
<text x="1784.54" y="625.5" font-size="14.2" text-anchor="middle" fill="#111" textLength="14.1" lengthAdjust="spacingAndGlyphs">48</text>
<line x1="1821.28" y1="604.6" x2="1821.28" y2="608.2" stroke="#222" stroke-width="1"/>
<text x="1821.28" y="625.5" font-size="14.2" text-anchor="middle" fill="#111" textLength="14.1" lengthAdjust="spacingAndGlyphs">43</text>
<path d="M130.9 606.3L135.8 611.2H126.0Z" fill="#000"/>
<text x="958.4" y="643" font-size="14.2" text-anchor="middle" fill="#111" textLength="82.5" lengthAdjust="spacingAndGlyphs">Combinazione</text>
<text transform="translate(30.8,475) rotate(-90)" font-size="14.2" text-anchor="middle" fill="#111" textLength="37.5" lengthAdjust="spacingAndGlyphs">Valore</text>
<rect x="862.8" y="696.8" width="25.8" height="10.8" fill="#d6dc7e" stroke="#2a2a2a" stroke-width="1.2"/>
<text x="898.7" y="706.2" font-size="14.2" fill="#111" textLength="47" lengthAdjust="spacingAndGlyphs">&#950;E(SLV)</text>
<rect x="958.7" y="696.8" width="25.8" height="10.8" fill="#ffdc7b" stroke="#2a2a2a" stroke-width="1.2"/>
<text x="994.7" y="706.2" font-size="14.2" fill="#111" textLength="47.5" lengthAdjust="spacingAndGlyphs">&#950;E(SLD)</text>
</svg>
<div class="a" style="left:9px;top:747px;width:1883px;height:114px;background:#fff;border:1px solid #a0a0a0;"></div>
<div class="hc" style="left:10px;top:748px;width:269px;height:18px;background:#f0f0f0;font-size:11px;padding-top:2px;">Parametro</div>
<div class="hc" style="left:279px;top:748px;width:538px;height:18px;background:#f0f0f0;font-size:11px;padding-top:2px;justify-content:flex-start;padding-left:5px;">Descrizione</div>
<div class="hc" style="left:817px;top:748px;width:269px;height:18px;background:#f0f0f0;font-size:11px;padding-top:2px;">Visibile</div>
<div class="hc" style="left:1086px;top:748px;width:269px;height:18px;background:#f0f0f0;font-size:11px;padding-top:2px;">Grafico</div>
<div class="hc" style="left:1355px;top:748px;width:536px;height:18px;background:#f0f0f0;font-size:11px;padding-top:2px;justify-content:flex-start;padding-left:5px;">Colore</div>
<div class="dc" style="left:10px;top:766px;width:269px;height:19px;line-height:18px;padding-top:1px;"><i style="transform:scaleX(0.9)">T1X</i></div>
<div class="dc" style="left:279px;top:766px;width:538px;height:19px;line-height:18px;padding-top:1px;text-align:left;padding-left:5px;"><i class="l" style="transform:scaleX(0.885)">Periodo di vibrazione fondamentale in direzione X' (sec)</i></div>
<div class="dc" style="left:817px;top:766px;width:269px;height:19px;line-height:18px;padding-top:1px;"></div>
<div class="dc" style="left:1086px;top:766px;width:269px;height:19px;line-height:18px;padding-top:1px;"><i style="transform:scaleX(0.885)">Barre</i></div>
<div class="dc" style="left:1355px;top:766px;width:536px;height:19px;line-height:18px;padding-top:1px;text-align:left;padding-left:28px;"><i class="l" style="transform:scaleX(0.885)">115; 1</i></div>
<div class="a" style="left:1358px;top:770px;width:16px;height:11px;background:#7378a8;"></div>
<div class="a" style="left:944.5px;top:768.4px;width:13px;height:13px;background:#fff;border:1px solid #444;"></div>
<div class="dc" style="left:10px;top:785px;width:269px;height:19px;line-height:18px;padding-top:1px;"><i style="transform:scaleX(0.9)">T1Y</i></div>
<div class="dc" style="left:279px;top:785px;width:538px;height:19px;line-height:18px;padding-top:1px;text-align:left;padding-left:5px;"><i class="l" style="transform:scaleX(0.885)">Periodo di vibrazione fondamentale in direzione Y' (sec)</i></div>
<div class="dc" style="left:817px;top:785px;width:269px;height:19px;line-height:18px;padding-top:1px;"></div>
<div class="dc" style="left:1086px;top:785px;width:269px;height:19px;line-height:18px;padding-top:1px;"><i style="transform:scaleX(0.885)">Barre</i></div>
<div class="dc" style="left:1355px;top:785px;width:536px;height:19px;line-height:18px;padding-top:1px;text-align:left;padding-left:28px;"><i class="l" style="transform:scaleX(0.885)">156; 1</i></div>
<div class="a" style="left:1358px;top:789px;width:16px;height:11px;background:#9cbad0;"></div>
<div class="a" style="left:944.5px;top:787.4px;width:13px;height:13px;background:#fff;border:1px solid #444;"></div>
<div class="dc" style="left:10px;top:804px;width:269px;height:19px;line-height:18px;padding-top:1px;"><i style="transform:scaleX(0.9)">&zeta;E(SLV)</i></div>
<div class="dc" style="left:279px;top:804px;width:538px;height:19px;line-height:18px;padding-top:1px;text-align:left;padding-left:5px;"><i class="l" style="transform:scaleX(0.885)">Indicatore di rischio sismico in termini di PGA (SLV)</i></div>
<div class="dc" style="left:817px;top:804px;width:269px;height:19px;line-height:18px;padding-top:1px;"></div>
<div class="dc" style="left:1086px;top:804px;width:269px;height:19px;line-height:18px;padding-top:1px;"><i style="transform:scaleX(0.885)">Barre</i></div>
<div class="dc" style="left:1355px;top:804px;width:536px;height:19px;line-height:18px;padding-top:1px;text-align:left;padding-left:28px;"><i class="l" style="transform:scaleX(0.885)">214; 2</i></div>
<div class="a" style="left:1358px;top:808px;width:16px;height:11px;background:#d6dc7e;"></div>
<div class="a" style="left:944.5px;top:806.4px;width:13px;height:13px;background:#fff;border:1px solid #444;"></div>
<svg style="left:944.5px;top:806.4px" width="13" height="13"><path d="M2.6 6.8L5.2 9.6L10.6 3.3" stroke="#333" stroke-width="1.3" fill="none"/></svg>
<div class="dc" style="left:10px;top:823px;width:269px;height:19px;line-height:18px;padding-top:1px;"><i style="transform:scaleX(0.9)">&zeta;E(SLD)</i></div>
<div class="dc" style="left:279px;top:823px;width:538px;height:19px;line-height:18px;padding-top:1px;text-align:left;padding-left:5px;"><i class="l" style="transform:scaleX(0.885)">Indicatore di rischio sismico in termini di PGA (SLD)</i></div>
<div class="dc" style="left:817px;top:823px;width:269px;height:19px;line-height:18px;padding-top:1px;"></div>
<div class="dc" style="left:1086px;top:823px;width:269px;height:19px;line-height:18px;padding-top:1px;"><i style="transform:scaleX(0.885)">Barre</i></div>
<div class="dc" style="left:1355px;top:823px;width:536px;height:19px;line-height:18px;padding-top:1px;text-align:left;padding-left:28px;"><i class="l" style="transform:scaleX(0.885)">255; 2</i></div>
<div class="a" style="left:1358px;top:827px;width:16px;height:11px;background:#ffdc7b;"></div>
<div class="a" style="left:944.5px;top:825.4px;width:13px;height:13px;background:#fff;border:1px solid #444;"></div>
<svg style="left:944.5px;top:825.4px" width="13" height="13"><path d="M2.6 6.8L5.2 9.6L10.6 3.3" stroke="#333" stroke-width="1.3" fill="none"/></svg>
<div class="dc" style="left:10px;top:842px;width:269px;height:18px;line-height:17px;padding-top:1px;"><i style="transform:scaleX(0.9)">&zeta;E(SLO)</i></div>
<div class="dc" style="left:279px;top:842px;width:538px;height:18px;line-height:17px;padding-top:1px;text-align:left;padding-left:5px;"><i class="l" style="transform:scaleX(0.885)">Indicatore di rischio sismico in termini di PGA (SLO)</i></div>
<div class="dc" style="left:817px;top:842px;width:269px;height:18px;line-height:17px;padding-top:1px;"></div>
<div class="dc" style="left:1086px;top:842px;width:269px;height:18px;line-height:17px;padding-top:1px;"><i style="transform:scaleX(0.885)">Barre</i></div>
<div class="dc" style="left:1355px;top:842px;width:536px;height:18px;line-height:17px;padding-top:1px;text-align:left;padding-left:28px;"><i class="l" style="transform:scaleX(0.885)">189; 1</i></div>
<div class="a" style="left:1358px;top:846px;width:16px;height:11px;background:#bd7f6a;"></div>
<div class="a" style="left:944.5px;top:844.4px;width:13px;height:13px;background:#fff;border:1px solid #444;"></div>
<div class="a ui" style="left:12px;top:865px;width:70px;height:16px;line-height:16px;">Tipo grafico:</div>
<div class="a" style="left:82px;top:863px;width:108px;height:22px;background:#fff;"></div>
<div class="a" style="left:190px;top:863px;width:12px;height:22px;background:#f0f0f0;"></div>
<div class="a ui" style="left:86px;top:866px;width:100px;height:16px;line-height:16px;color:#000;letter-spacing:-0.43px;">Barre e Linee</div>
<svg style="left:192px;top:872px" width="6" height="4"><path d="M0 0H6L3 4Z" fill="#111"/></svg>
<div class="a ui" style="left:235px;top:865px;width:40px;height:16px;line-height:16px;">Valore:</div>
<div class="a ui" style="left:279px;top:865px;width:50px;height:16px;line-height:16px;">assoluto</div>
<div class="a ui" style="left:333px;top:865px;width:80px;height:16px;line-height:16px;">normalizzato</div>
<div class="a" style="left:1412px;top:424px;width:510px;height:546px;background:#fff;"></div>
<div class="a" style="left:1415px;top:427px;width:498px;height:532px;background:#fff;border:1px solid #7a7a7a;box-shadow:2px 2px 4px rgba(0,0,0,0.62);"></div>
<svg style="left:0;top:0" width="1922" height="970">
<circle cx="1653.95" cy="655.40" r="17.54" fill="none" stroke="#c9c9c9" stroke-width="0.85" stroke-dasharray="3.6 2.4"/>
<circle cx="1653.95" cy="655.40" r="35.07" fill="none" stroke="#c9c9c9" stroke-width="0.85" stroke-dasharray="3.6 2.4"/>
<circle cx="1653.95" cy="655.40" r="52.60" fill="none" stroke="#c9c9c9" stroke-width="0.85" stroke-dasharray="3.6 2.4"/>
<circle cx="1653.95" cy="655.40" r="70.14" fill="none" stroke="#c9c9c9" stroke-width="0.85" stroke-dasharray="3.6 2.4"/>
<circle cx="1653.95" cy="655.40" r="87.67" fill="none" stroke="#c9c9c9" stroke-width="0.85" stroke-dasharray="3.6 2.4"/>
<circle cx="1653.95" cy="655.40" r="105.21" fill="none" stroke="#c9c9c9" stroke-width="0.85" stroke-dasharray="3.6 2.4"/>
<circle cx="1653.95" cy="655.40" r="122.75" fill="none" stroke="#c9c9c9" stroke-width="0.85" stroke-dasharray="3.6 2.4"/>
<circle cx="1653.95" cy="655.40" r="140.28" fill="none" stroke="#c9c9c9" stroke-width="0.85" stroke-dasharray="3.6 2.4"/>
<circle cx="1653.95" cy="655.40" r="157.81" fill="none" stroke="#c9c9c9" stroke-width="0.85" stroke-dasharray="3.6 2.4"/>
<text x="1650.4" y="669.50" font-size="14.2" text-anchor="middle" fill="#9896a0" textLength="17" lengthAdjust="spacingAndGlyphs">0.0</text>
<text x="1650.4" y="651.97" font-size="14.2" text-anchor="middle" fill="#9896a0" textLength="17" lengthAdjust="spacingAndGlyphs">0.1</text>
<text x="1650.4" y="634.43" font-size="14.2" text-anchor="middle" fill="#9896a0" textLength="17" lengthAdjust="spacingAndGlyphs">0.2</text>
<text x="1650.4" y="616.89" font-size="14.2" text-anchor="middle" fill="#9896a0" textLength="17" lengthAdjust="spacingAndGlyphs">0.3</text>
<text x="1650.4" y="599.36" font-size="14.2" text-anchor="middle" fill="#9896a0" textLength="17" lengthAdjust="spacingAndGlyphs">0.4</text>
<text x="1650.4" y="581.83" font-size="14.2" text-anchor="middle" fill="#9896a0" textLength="17" lengthAdjust="spacingAndGlyphs">0.5</text>
<text x="1650.4" y="564.29" font-size="14.2" text-anchor="middle" fill="#9896a0" textLength="17" lengthAdjust="spacingAndGlyphs">0.6</text>
<text x="1650.4" y="546.75" font-size="14.2" text-anchor="middle" fill="#9896a0" textLength="17" lengthAdjust="spacingAndGlyphs">0.7</text>
<text x="1650.4" y="529.22" font-size="14.2" text-anchor="middle" fill="#9896a0" textLength="17" lengthAdjust="spacingAndGlyphs">0.8</text>
<text x="1650.4" y="511.68" font-size="14.2" text-anchor="middle" fill="#9896a0" textLength="17" lengthAdjust="spacingAndGlyphs">0.9</text>
<text x="1650.4" y="494.15" font-size="14.2" text-anchor="middle" fill="#9896a0" textLength="17" lengthAdjust="spacingAndGlyphs">1.0</text>
<circle cx="1653.95" cy="655.40" r="175.35" fill="none" stroke="#262626" stroke-width="0.9"/>
<line x1="1653.95" y1="480.05" x2="1653.95" y2="476.05" stroke="#222" stroke-width="0.9"/>
<text x="1652.65" y="472.15" font-size="14.2" text-anchor="middle" fill="#111" textLength="13.3" lengthAdjust="spacingAndGlyphs">37</text>
<line x1="1676.84" y1="481.55" x2="1677.36" y2="477.58" stroke="#222" stroke-width="0.9"/>
<text x="1675.54" y="473.65" font-size="14.2" text-anchor="middle" fill="#111" textLength="13.3" lengthAdjust="spacingAndGlyphs">36</text>
<line x1="1699.33" y1="486.02" x2="1700.37" y2="482.16" stroke="#222" stroke-width="0.9"/>
<text x="1698.03" y="478.12" font-size="14.2" text-anchor="middle" fill="#111" textLength="13.3" lengthAdjust="spacingAndGlyphs">35</text>
<line x1="1721.05" y1="493.40" x2="1722.58" y2="489.70" stroke="#222" stroke-width="0.9"/>
<text x="1732.35" y="487.30" font-size="14.2" text-anchor="middle" fill="#111" textLength="13.3" lengthAdjust="spacingAndGlyphs">34</text>
<line x1="1741.62" y1="503.54" x2="1743.62" y2="500.08" stroke="#222" stroke-width="0.9"/>
<text x="1752.92" y="497.44" font-size="14.2" text-anchor="middle" fill="#111" textLength="13.3" lengthAdjust="spacingAndGlyphs">33</text>
<line x1="1760.70" y1="516.29" x2="1763.13" y2="513.11" stroke="#222" stroke-width="0.9"/>
<text x="1772.00" y="510.19" font-size="14.2" text-anchor="middle" fill="#111" textLength="13.3" lengthAdjust="spacingAndGlyphs">32</text>
<line x1="1777.94" y1="531.41" x2="1780.77" y2="528.58" stroke="#222" stroke-width="0.9"/>
<text x="1789.24" y="525.31" font-size="14.2" text-anchor="middle" fill="#111" textLength="13.3" lengthAdjust="spacingAndGlyphs">31</text>
<line x1="1793.06" y1="548.65" x2="1796.24" y2="546.22" stroke="#222" stroke-width="0.9"/>
<text x="1804.36" y="542.55" font-size="14.2" text-anchor="middle" fill="#111" textLength="13.3" lengthAdjust="spacingAndGlyphs">30</text>
<line x1="1805.81" y1="567.72" x2="1809.27" y2="565.72" stroke="#222" stroke-width="0.9"/>
<text x="1818.11" y="571.52" font-size="14.2" text-anchor="middle" fill="#111" textLength="13.3" lengthAdjust="spacingAndGlyphs">29</text>
<line x1="1815.95" y1="588.30" x2="1819.65" y2="586.77" stroke="#222" stroke-width="0.9"/>
<text x="1828.25" y="592.20" font-size="14.2" text-anchor="middle" fill="#111" textLength="13.3" lengthAdjust="spacingAndGlyphs">28</text>
<line x1="1823.33" y1="610.02" x2="1827.19" y2="608.98" stroke="#222" stroke-width="0.9"/>
<text x="1835.63" y="613.92" font-size="14.2" text-anchor="middle" fill="#111" textLength="13.3" lengthAdjust="spacingAndGlyphs">27</text>
<line x1="1827.80" y1="632.51" x2="1831.77" y2="631.99" stroke="#222" stroke-width="0.9"/>
<text x="1840.10" y="636.41" font-size="14.2" text-anchor="middle" fill="#111" textLength="13.3" lengthAdjust="spacingAndGlyphs">26</text>
<line x1="1829.30" y1="655.40" x2="1833.30" y2="655.40" stroke="#222" stroke-width="0.9"/>
<text x="1838.00" y="659.30" font-size="14.2" text-anchor="middle" fill="#111" textLength="6.7" lengthAdjust="spacingAndGlyphs">1</text>
<line x1="1827.80" y1="678.29" x2="1831.77" y2="678.81" stroke="#222" stroke-width="0.9"/>
<text x="1840.10" y="682.69" font-size="14.2" text-anchor="middle" fill="#111" textLength="13.3" lengthAdjust="spacingAndGlyphs">96</text>
<line x1="1823.33" y1="700.78" x2="1827.19" y2="701.82" stroke="#222" stroke-width="0.9"/>
<text x="1835.63" y="705.18" font-size="14.2" text-anchor="middle" fill="#111" textLength="13.3" lengthAdjust="spacingAndGlyphs">95</text>
<line x1="1815.95" y1="722.50" x2="1819.65" y2="724.03" stroke="#222" stroke-width="0.9"/>
<text x="1828.25" y="726.90" font-size="14.2" text-anchor="middle" fill="#111" textLength="13.3" lengthAdjust="spacingAndGlyphs">94</text>
<line x1="1805.81" y1="743.07" x2="1809.27" y2="745.07" stroke="#222" stroke-width="0.9"/>
<text x="1817.11" y="758.38" font-size="14.2" text-anchor="middle" fill="#111" textLength="13.3" lengthAdjust="spacingAndGlyphs">93</text>
<line x1="1793.06" y1="762.15" x2="1796.24" y2="764.58" stroke="#222" stroke-width="0.9"/>
<text x="1804.36" y="777.45" font-size="14.2" text-anchor="middle" fill="#111" textLength="13.3" lengthAdjust="spacingAndGlyphs">92</text>
<line x1="1777.94" y1="779.39" x2="1780.77" y2="782.22" stroke="#222" stroke-width="0.9"/>
<text x="1789.24" y="794.69" font-size="14.2" text-anchor="middle" fill="#111" textLength="13.3" lengthAdjust="spacingAndGlyphs">91</text>
<line x1="1760.70" y1="794.51" x2="1763.13" y2="797.69" stroke="#222" stroke-width="0.9"/>
<text x="1772.00" y="809.81" font-size="14.2" text-anchor="middle" fill="#111" textLength="13.3" lengthAdjust="spacingAndGlyphs">90</text>
<line x1="1741.62" y1="807.26" x2="1743.62" y2="810.72" stroke="#222" stroke-width="0.9"/>
<text x="1752.92" y="822.56" font-size="14.2" text-anchor="middle" fill="#111" textLength="13.3" lengthAdjust="spacingAndGlyphs">89</text>
<line x1="1721.05" y1="817.40" x2="1722.58" y2="821.10" stroke="#222" stroke-width="0.9"/>
<text x="1732.35" y="832.70" font-size="14.2" text-anchor="middle" fill="#111" textLength="13.3" lengthAdjust="spacingAndGlyphs">88</text>
<line x1="1699.33" y1="824.78" x2="1700.37" y2="828.64" stroke="#222" stroke-width="0.9"/>
<text x="1697.83" y="840.78" font-size="14.2" text-anchor="middle" fill="#111" textLength="13.3" lengthAdjust="spacingAndGlyphs">87</text>
<line x1="1676.84" y1="829.25" x2="1677.36" y2="833.22" stroke="#222" stroke-width="0.9"/>
<text x="1675.34" y="845.55" font-size="14.2" text-anchor="middle" fill="#111" textLength="13.3" lengthAdjust="spacingAndGlyphs">86</text>
<line x1="1653.95" y1="830.75" x2="1653.95" y2="834.75" stroke="#222" stroke-width="0.9"/>
<text x="1652.45" y="848.05" font-size="14.2" text-anchor="middle" fill="#111" textLength="13.3" lengthAdjust="spacingAndGlyphs">85</text>
<line x1="1631.06" y1="829.25" x2="1630.54" y2="833.22" stroke="#222" stroke-width="0.9"/>
<text x="1629.56" y="845.55" font-size="14.2" text-anchor="middle" fill="#111" textLength="13.3" lengthAdjust="spacingAndGlyphs">84</text>
<line x1="1608.57" y1="824.78" x2="1607.53" y2="828.64" stroke="#222" stroke-width="0.9"/>
<text x="1607.07" y="840.78" font-size="14.2" text-anchor="middle" fill="#111" textLength="13.3" lengthAdjust="spacingAndGlyphs">83</text>
<line x1="1586.85" y1="817.40" x2="1585.32" y2="821.10" stroke="#222" stroke-width="0.9"/>
<text x="1573.15" y="832.70" font-size="14.2" text-anchor="middle" fill="#111" textLength="13.3" lengthAdjust="spacingAndGlyphs">82</text>
<line x1="1566.28" y1="807.26" x2="1564.28" y2="810.72" stroke="#222" stroke-width="0.9"/>
<text x="1552.58" y="822.56" font-size="14.2" text-anchor="middle" fill="#111" textLength="13.3" lengthAdjust="spacingAndGlyphs">81</text>
<line x1="1547.20" y1="794.51" x2="1544.77" y2="797.69" stroke="#222" stroke-width="0.9"/>
<text x="1533.50" y="809.81" font-size="14.2" text-anchor="middle" fill="#111" textLength="13.3" lengthAdjust="spacingAndGlyphs">80</text>
<line x1="1529.96" y1="779.39" x2="1527.13" y2="782.22" stroke="#222" stroke-width="0.9"/>
<text x="1516.26" y="794.69" font-size="14.2" text-anchor="middle" fill="#111" textLength="13.3" lengthAdjust="spacingAndGlyphs">79</text>
<line x1="1514.84" y1="762.15" x2="1511.66" y2="764.58" stroke="#222" stroke-width="0.9"/>
<text x="1501.14" y="777.45" font-size="14.2" text-anchor="middle" fill="#111" textLength="13.3" lengthAdjust="spacingAndGlyphs">78</text>
<line x1="1502.09" y1="743.08" x2="1498.63" y2="745.08" stroke="#222" stroke-width="0.9"/>
<text x="1487.49" y="748.68" font-size="14.2" text-anchor="middle" fill="#111" textLength="13.3" lengthAdjust="spacingAndGlyphs">77</text>
<line x1="1491.95" y1="722.50" x2="1488.25" y2="724.03" stroke="#222" stroke-width="0.9"/>
<text x="1476.75" y="727.00" font-size="14.2" text-anchor="middle" fill="#111" textLength="13.3" lengthAdjust="spacingAndGlyphs">76</text>
<line x1="1484.57" y1="700.78" x2="1480.71" y2="701.82" stroke="#222" stroke-width="0.9"/>
<text x="1469.37" y="705.28" font-size="14.2" text-anchor="middle" fill="#111" textLength="13.3" lengthAdjust="spacingAndGlyphs">75</text>
<line x1="1480.10" y1="678.29" x2="1476.13" y2="678.81" stroke="#222" stroke-width="0.9"/>
<text x="1464.90" y="681.99" font-size="14.2" text-anchor="middle" fill="#111" textLength="13.3" lengthAdjust="spacingAndGlyphs">74</text>
<line x1="1478.60" y1="655.40" x2="1474.60" y2="655.40" stroke="#222" stroke-width="0.9"/>
<text x="1463.40" y="659.10" font-size="14.2" text-anchor="middle" fill="#111" textLength="13.3" lengthAdjust="spacingAndGlyphs">49</text>
<line x1="1480.10" y1="632.51" x2="1476.13" y2="631.99" stroke="#222" stroke-width="0.9"/>
<text x="1464.90" y="636.21" font-size="14.2" text-anchor="middle" fill="#111" textLength="13.3" lengthAdjust="spacingAndGlyphs">48</text>
<line x1="1484.57" y1="610.02" x2="1480.71" y2="608.98" stroke="#222" stroke-width="0.9"/>
<text x="1469.37" y="613.72" font-size="14.2" text-anchor="middle" fill="#111" textLength="13.3" lengthAdjust="spacingAndGlyphs">47</text>
<line x1="1491.95" y1="588.30" x2="1488.25" y2="586.77" stroke="#222" stroke-width="0.9"/>
<text x="1476.75" y="592.00" font-size="14.2" text-anchor="middle" fill="#111" textLength="13.3" lengthAdjust="spacingAndGlyphs">46</text>
<line x1="1502.09" y1="567.72" x2="1498.63" y2="565.72" stroke="#222" stroke-width="0.9"/>
<text x="1486.89" y="571.52" font-size="14.2" text-anchor="middle" fill="#111" textLength="13.3" lengthAdjust="spacingAndGlyphs">45</text>
<line x1="1514.84" y1="548.65" x2="1511.66" y2="546.22" stroke="#222" stroke-width="0.9"/>
<text x="1500.44" y="542.65" font-size="14.2" text-anchor="middle" fill="#111" textLength="13.3" lengthAdjust="spacingAndGlyphs">44</text>
<line x1="1529.96" y1="531.41" x2="1527.13" y2="528.58" stroke="#222" stroke-width="0.9"/>
<text x="1515.56" y="525.41" font-size="14.2" text-anchor="middle" fill="#111" textLength="13.3" lengthAdjust="spacingAndGlyphs">43</text>
<line x1="1547.20" y1="516.29" x2="1544.77" y2="513.11" stroke="#222" stroke-width="0.9"/>
<text x="1532.80" y="510.29" font-size="14.2" text-anchor="middle" fill="#111" textLength="13.3" lengthAdjust="spacingAndGlyphs">42</text>
<line x1="1566.28" y1="503.54" x2="1564.27" y2="500.08" stroke="#222" stroke-width="0.9"/>
<text x="1551.88" y="497.54" font-size="14.2" text-anchor="middle" fill="#111" textLength="13.3" lengthAdjust="spacingAndGlyphs">41</text>
<line x1="1586.85" y1="493.40" x2="1585.32" y2="489.70" stroke="#222" stroke-width="0.9"/>
<text x="1572.45" y="487.40" font-size="14.2" text-anchor="middle" fill="#111" textLength="13.3" lengthAdjust="spacingAndGlyphs">40</text>
<line x1="1608.57" y1="486.02" x2="1607.53" y2="482.16" stroke="#222" stroke-width="0.9"/>
<text x="1607.27" y="478.12" font-size="14.2" text-anchor="middle" fill="#111" textLength="13.3" lengthAdjust="spacingAndGlyphs">39</text>
<line x1="1631.06" y1="481.55" x2="1630.54" y2="477.58" stroke="#222" stroke-width="0.9"/>
<text x="1629.76" y="473.65" font-size="14.2" text-anchor="middle" fill="#111" textLength="13.3" lengthAdjust="spacingAndGlyphs">38</text>
<path d="M1653.95 551.42L1667.13 555.26L1683.18 546.32L1696.09 553.66L1702.43 571.42L1711.81 580.00L1730.70 578.65L1739.78 589.54L1729.73 611.65L1732.68 622.79L1744.40 631.16L1746.44 643.22L1762.49 655.40L1799.29 674.53L1792.33 692.48L1815.79 722.44L1805.20 742.72L1746.32 726.28L1731.69 733.14L1737.53 764.33L1721.72 772.79L1698.98 764.10L1684.49 769.39L1671.44 788.22L1653.95 799.54L1641.71 748.41L1630.85 741.61L1610.53 760.22L1605.20 739.83L1594.92 732.33L1577.82 731.53L1567.70 721.58L1584.40 695.56L1581.37 685.46L1562.49 679.91L1566.33 666.94L1509.64 655.40L1510.35 636.49L1487.45 610.79L1494.22 589.24L1544.31 592.10L1555.60 579.93L1556.62 558.07L1570.79 547.03L1595.03 553.35L1609.26 547.51L1617.19 518.21L1635.23 513.19Z" fill="none" stroke="#ffd974" stroke-width="2.6" stroke-linejoin="round"/>
<circle cx="1653.95" cy="551.42" r="3.05" fill="#ffd974" stroke="#111" stroke-width="1"/>
<circle cx="1667.13" cy="555.26" r="3.05" fill="#ffd974" stroke="#111" stroke-width="1"/>
<circle cx="1683.18" cy="546.32" r="3.05" fill="#ffd974" stroke="#111" stroke-width="1"/>
<circle cx="1696.09" cy="553.66" r="3.05" fill="#ffd974" stroke="#111" stroke-width="1"/>
<circle cx="1702.43" cy="571.42" r="3.05" fill="#ffd974" stroke="#111" stroke-width="1"/>
<circle cx="1711.81" cy="580.00" r="3.05" fill="#ffd974" stroke="#111" stroke-width="1"/>
<circle cx="1730.70" cy="578.65" r="3.05" fill="#ffd974" stroke="#111" stroke-width="1"/>
<circle cx="1739.78" cy="589.54" r="3.05" fill="#ffd974" stroke="#111" stroke-width="1"/>
<circle cx="1729.73" cy="611.65" r="3.05" fill="#ffd974" stroke="#111" stroke-width="1"/>
<circle cx="1732.68" cy="622.79" r="3.05" fill="#ffd974" stroke="#111" stroke-width="1"/>
<circle cx="1744.40" cy="631.16" r="3.05" fill="#ffd974" stroke="#111" stroke-width="1"/>
<circle cx="1746.44" cy="643.22" r="3.05" fill="#ffd974" stroke="#111" stroke-width="1"/>
<circle cx="1762.49" cy="655.40" r="3.05" fill="#ffd974" stroke="#111" stroke-width="1"/>
<circle cx="1799.29" cy="674.53" r="3.05" fill="#ffd974" stroke="#111" stroke-width="1"/>
<circle cx="1792.33" cy="692.48" r="3.05" fill="#ffd974" stroke="#111" stroke-width="1"/>
<circle cx="1815.79" cy="722.44" r="3.05" fill="#ffd974" stroke="#111" stroke-width="1"/>
<circle cx="1805.20" cy="742.72" r="3.05" fill="#ffd974" stroke="#111" stroke-width="1"/>
<circle cx="1746.32" cy="726.28" r="3.05" fill="#ffd974" stroke="#111" stroke-width="1"/>
<circle cx="1731.69" cy="733.14" r="3.05" fill="#ffd974" stroke="#111" stroke-width="1"/>
<circle cx="1737.53" cy="764.33" r="3.05" fill="#ffd974" stroke="#111" stroke-width="1"/>
<circle cx="1721.72" cy="772.79" r="3.05" fill="#ffd974" stroke="#111" stroke-width="1"/>
<circle cx="1698.98" cy="764.10" r="3.05" fill="#ffd974" stroke="#111" stroke-width="1"/>
<circle cx="1684.49" cy="769.39" r="3.05" fill="#ffd974" stroke="#111" stroke-width="1"/>
<circle cx="1671.44" cy="788.22" r="3.05" fill="#ffd974" stroke="#111" stroke-width="1"/>
<circle cx="1653.95" cy="799.54" r="3.05" fill="#ffd974" stroke="#111" stroke-width="1"/>
<circle cx="1641.71" cy="748.41" r="3.05" fill="#ffd974" stroke="#111" stroke-width="1"/>
<circle cx="1630.85" cy="741.61" r="3.05" fill="#ffd974" stroke="#111" stroke-width="1"/>
<circle cx="1610.53" cy="760.22" r="3.05" fill="#ffd974" stroke="#111" stroke-width="1"/>
<circle cx="1605.20" cy="739.83" r="3.05" fill="#ffd974" stroke="#111" stroke-width="1"/>
<circle cx="1594.92" cy="732.33" r="3.05" fill="#ffd974" stroke="#111" stroke-width="1"/>
<circle cx="1577.82" cy="731.53" r="3.05" fill="#ffd974" stroke="#111" stroke-width="1"/>
<circle cx="1567.70" cy="721.58" r="3.05" fill="#ffd974" stroke="#111" stroke-width="1"/>
<circle cx="1584.40" cy="695.56" r="3.05" fill="#ffd974" stroke="#111" stroke-width="1"/>
<circle cx="1581.37" cy="685.46" r="3.05" fill="#ffd974" stroke="#111" stroke-width="1"/>
<circle cx="1562.49" cy="679.91" r="3.05" fill="#ffd974" stroke="#111" stroke-width="1"/>
<circle cx="1566.33" cy="666.94" r="3.05" fill="#ffd974" stroke="#111" stroke-width="1"/>
<circle cx="1509.64" cy="655.40" r="3.05" fill="#ffd974" stroke="#111" stroke-width="1"/>
<circle cx="1510.35" cy="636.49" r="3.05" fill="#ffd974" stroke="#111" stroke-width="1"/>
<circle cx="1487.45" cy="610.79" r="3.05" fill="#ffd974" stroke="#111" stroke-width="1"/>
<circle cx="1494.22" cy="589.24" r="3.05" fill="#ffd974" stroke="#111" stroke-width="1"/>
<circle cx="1544.31" cy="592.10" r="3.05" fill="#ffd974" stroke="#111" stroke-width="1"/>
<circle cx="1555.60" cy="579.93" r="3.05" fill="#ffd974" stroke="#111" stroke-width="1"/>
<circle cx="1556.62" cy="558.07" r="3.05" fill="#ffd974" stroke="#111" stroke-width="1"/>
<circle cx="1570.79" cy="547.03" r="3.05" fill="#ffd974" stroke="#111" stroke-width="1"/>
<circle cx="1595.03" cy="553.35" r="3.05" fill="#ffd974" stroke="#111" stroke-width="1"/>
<circle cx="1609.26" cy="547.51" r="3.05" fill="#ffd974" stroke="#111" stroke-width="1"/>
<circle cx="1617.19" cy="518.21" r="3.05" fill="#ffd974" stroke="#111" stroke-width="1"/>
<circle cx="1635.23" cy="513.19" r="3.05" fill="#ffd974" stroke="#111" stroke-width="1"/>
<path d="M1653.95 537.39L1669.49 537.36L1674.83 577.49L1684.95 580.55L1711.03 556.54L1722.80 565.67L1742.73 566.62L1753.56 578.97L1744.76 602.97L1746.78 616.95L1720.68 637.52L1719.49 646.77L1734.44 655.40L1810.41 676.00L1806.39 696.25L1807.53 719.01L1805.20 742.72L1763.43 739.41L1746.70 748.15L1716.72 737.20L1705.77 745.15L1704.01 776.25L1687.90 782.09L1673.04 800.39L1653.95 794.10L1639.23 767.19L1624.00 767.19L1622.34 731.70L1594.94 757.60L1582.54 748.47L1561.70 747.65L1552.81 733.00L1562.84 708.00L1564.36 692.51L1586.37 673.51L1585.63 664.39L1493.50 655.40L1498.35 634.92L1490.33 611.56L1497.29 590.51L1525.63 581.31L1533.76 563.17L1580.67 582.12L1590.86 573.18L1589.07 543.03L1605.10 537.46L1621.18 533.11L1638.25 536.14Z" fill="none" stroke="#d3da7b" stroke-width="2.6" stroke-linejoin="round"/>
<circle cx="1653.95" cy="537.39" r="3.05" fill="#d3da7b" stroke="#111" stroke-width="1"/>
<circle cx="1669.49" cy="537.36" r="3.05" fill="#d3da7b" stroke="#111" stroke-width="1"/>
<circle cx="1674.83" cy="577.49" r="3.05" fill="#d3da7b" stroke="#111" stroke-width="1"/>
<circle cx="1684.95" cy="580.55" r="3.05" fill="#d3da7b" stroke="#111" stroke-width="1"/>
<circle cx="1711.03" cy="556.54" r="3.05" fill="#d3da7b" stroke="#111" stroke-width="1"/>
<circle cx="1722.80" cy="565.67" r="3.05" fill="#d3da7b" stroke="#111" stroke-width="1"/>
<circle cx="1742.73" cy="566.62" r="3.05" fill="#d3da7b" stroke="#111" stroke-width="1"/>
<circle cx="1753.56" cy="578.97" r="3.05" fill="#d3da7b" stroke="#111" stroke-width="1"/>
<circle cx="1744.76" cy="602.97" r="3.05" fill="#d3da7b" stroke="#111" stroke-width="1"/>
<circle cx="1746.78" cy="616.95" r="3.05" fill="#d3da7b" stroke="#111" stroke-width="1"/>
<circle cx="1720.68" cy="637.52" r="3.05" fill="#d3da7b" stroke="#111" stroke-width="1"/>
<circle cx="1719.49" cy="646.77" r="3.05" fill="#d3da7b" stroke="#111" stroke-width="1"/>
<circle cx="1734.44" cy="655.40" r="3.05" fill="#d3da7b" stroke="#111" stroke-width="1"/>
<circle cx="1810.41" cy="676.00" r="3.05" fill="#d3da7b" stroke="#111" stroke-width="1"/>
<circle cx="1806.39" cy="696.25" r="3.05" fill="#d3da7b" stroke="#111" stroke-width="1"/>
<circle cx="1807.53" cy="719.01" r="3.05" fill="#d3da7b" stroke="#111" stroke-width="1"/>
<circle cx="1805.20" cy="742.72" r="3.05" fill="#d3da7b" stroke="#111" stroke-width="1"/>
<circle cx="1763.43" cy="739.41" r="3.05" fill="#d3da7b" stroke="#111" stroke-width="1"/>
<circle cx="1746.70" cy="748.15" r="3.05" fill="#d3da7b" stroke="#111" stroke-width="1"/>
<circle cx="1716.72" cy="737.20" r="3.05" fill="#d3da7b" stroke="#111" stroke-width="1"/>
<circle cx="1705.77" cy="745.15" r="3.05" fill="#d3da7b" stroke="#111" stroke-width="1"/>
<circle cx="1704.01" cy="776.25" r="3.05" fill="#d3da7b" stroke="#111" stroke-width="1"/>
<circle cx="1687.90" cy="782.09" r="3.05" fill="#d3da7b" stroke="#111" stroke-width="1"/>
<circle cx="1673.04" cy="800.39" r="3.05" fill="#d3da7b" stroke="#111" stroke-width="1"/>
<circle cx="1653.95" cy="794.10" r="3.05" fill="#d3da7b" stroke="#111" stroke-width="1"/>
<circle cx="1639.23" cy="767.19" r="3.05" fill="#d3da7b" stroke="#111" stroke-width="1"/>
<circle cx="1624.00" cy="767.19" r="3.05" fill="#d3da7b" stroke="#111" stroke-width="1"/>
<circle cx="1622.34" cy="731.70" r="3.05" fill="#d3da7b" stroke="#111" stroke-width="1"/>
<circle cx="1594.94" cy="757.60" r="3.05" fill="#d3da7b" stroke="#111" stroke-width="1"/>
<circle cx="1582.54" cy="748.47" r="3.05" fill="#d3da7b" stroke="#111" stroke-width="1"/>
<circle cx="1561.70" cy="747.65" r="3.05" fill="#d3da7b" stroke="#111" stroke-width="1"/>
<circle cx="1552.81" cy="733.00" r="3.05" fill="#d3da7b" stroke="#111" stroke-width="1"/>
<circle cx="1562.84" cy="708.00" r="3.05" fill="#d3da7b" stroke="#111" stroke-width="1"/>
<circle cx="1564.36" cy="692.51" r="3.05" fill="#d3da7b" stroke="#111" stroke-width="1"/>
<circle cx="1586.37" cy="673.51" r="3.05" fill="#d3da7b" stroke="#111" stroke-width="1"/>
<circle cx="1585.63" cy="664.39" r="3.05" fill="#d3da7b" stroke="#111" stroke-width="1"/>
<circle cx="1493.50" cy="655.40" r="3.05" fill="#d3da7b" stroke="#111" stroke-width="1"/>
<circle cx="1498.35" cy="634.92" r="3.05" fill="#d3da7b" stroke="#111" stroke-width="1"/>
<circle cx="1490.33" cy="611.56" r="3.05" fill="#d3da7b" stroke="#111" stroke-width="1"/>
<circle cx="1497.29" cy="590.51" r="3.05" fill="#d3da7b" stroke="#111" stroke-width="1"/>
<circle cx="1525.63" cy="581.31" r="3.05" fill="#d3da7b" stroke="#111" stroke-width="1"/>
<circle cx="1533.76" cy="563.17" r="3.05" fill="#d3da7b" stroke="#111" stroke-width="1"/>
<circle cx="1580.67" cy="582.12" r="3.05" fill="#d3da7b" stroke="#111" stroke-width="1"/>
<circle cx="1590.86" cy="573.18" r="3.05" fill="#d3da7b" stroke="#111" stroke-width="1"/>
<circle cx="1589.07" cy="543.03" r="3.05" fill="#d3da7b" stroke="#111" stroke-width="1"/>
<circle cx="1605.10" cy="537.46" r="3.05" fill="#d3da7b" stroke="#111" stroke-width="1"/>
<circle cx="1621.18" cy="533.11" r="3.05" fill="#d3da7b" stroke="#111" stroke-width="1"/>
<circle cx="1638.25" cy="536.14" r="3.05" fill="#d3da7b" stroke="#111" stroke-width="1"/>
<path d="M1653.95 529.50L1670.45 530.05L1694.11 505.50L1713.81 510.89L1723.30 535.28L1738.17 545.64L1765.91 543.44L1779.01 559.44L1775.44 585.26L1783.23 601.85L1821.63 610.47L1827.45 632.56L1755.65 655.40L1734.44 666.00L1732.37 676.41L1730.42 687.07L1725.63 696.78L1719.89 706.00L1712.72 714.17L1706.68 724.12L1697.09 730.11L1691.86 746.93L1679.64 751.27L1667.22 756.23L1653.95 757.28L1640.65 756.41L1627.76 753.13L1613.35 753.41L1597.93 752.44L1585.74 744.29L1572.61 736.74L1562.55 725.53L1554.64 712.74L1547.35 699.55L1538.61 686.31L1535.56 670.99L1551.37 655.40L1552.25 642.01L1541.32 625.22L1546.54 610.91L1564.96 604.02L1572.57 592.95L1562.82 564.27L1575.49 553.15L1591.61 547.43L1606.44 540.70L1617.10 517.87L1635.46 514.93Z" fill="none" stroke="#9bbcd2" stroke-width="2.6" stroke-linejoin="round"/>
<circle cx="1653.95" cy="529.50" r="3.05" fill="#9bbcd2" stroke="#111" stroke-width="1"/>
<circle cx="1670.45" cy="530.05" r="3.05" fill="#9bbcd2" stroke="#111" stroke-width="1"/>
<circle cx="1694.11" cy="505.50" r="3.05" fill="#9bbcd2" stroke="#111" stroke-width="1"/>
<circle cx="1713.81" cy="510.89" r="3.05" fill="#9bbcd2" stroke="#111" stroke-width="1"/>
<circle cx="1723.30" cy="535.28" r="3.05" fill="#9bbcd2" stroke="#111" stroke-width="1"/>
<circle cx="1738.17" cy="545.64" r="3.05" fill="#9bbcd2" stroke="#111" stroke-width="1"/>
<circle cx="1765.91" cy="543.44" r="3.05" fill="#9bbcd2" stroke="#111" stroke-width="1"/>
<circle cx="1779.01" cy="559.44" r="3.05" fill="#9bbcd2" stroke="#111" stroke-width="1"/>
<circle cx="1775.44" cy="585.26" r="3.05" fill="#9bbcd2" stroke="#111" stroke-width="1"/>
<circle cx="1783.23" cy="601.85" r="3.05" fill="#9bbcd2" stroke="#111" stroke-width="1"/>
<circle cx="1821.63" cy="610.47" r="3.05" fill="#9bbcd2" stroke="#111" stroke-width="1"/>
<circle cx="1827.45" cy="632.56" r="3.05" fill="#9bbcd2" stroke="#111" stroke-width="1"/>
<circle cx="1755.65" cy="655.40" r="3.05" fill="#9bbcd2" stroke="#111" stroke-width="1"/>
<circle cx="1734.44" cy="666.00" r="3.05" fill="#9bbcd2" stroke="#111" stroke-width="1"/>
<circle cx="1732.37" cy="676.41" r="3.05" fill="#9bbcd2" stroke="#111" stroke-width="1"/>
<circle cx="1730.42" cy="687.07" r="3.05" fill="#9bbcd2" stroke="#111" stroke-width="1"/>
<circle cx="1725.63" cy="696.78" r="3.05" fill="#9bbcd2" stroke="#111" stroke-width="1"/>
<circle cx="1719.89" cy="706.00" r="3.05" fill="#9bbcd2" stroke="#111" stroke-width="1"/>
<circle cx="1712.72" cy="714.17" r="3.05" fill="#9bbcd2" stroke="#111" stroke-width="1"/>
<circle cx="1706.68" cy="724.12" r="3.05" fill="#9bbcd2" stroke="#111" stroke-width="1"/>
<circle cx="1697.09" cy="730.11" r="3.05" fill="#9bbcd2" stroke="#111" stroke-width="1"/>
<circle cx="1691.86" cy="746.93" r="3.05" fill="#9bbcd2" stroke="#111" stroke-width="1"/>
<circle cx="1679.64" cy="751.27" r="3.05" fill="#9bbcd2" stroke="#111" stroke-width="1"/>
<circle cx="1667.22" cy="756.23" r="3.05" fill="#9bbcd2" stroke="#111" stroke-width="1"/>
<circle cx="1653.95" cy="757.28" r="3.05" fill="#9bbcd2" stroke="#111" stroke-width="1"/>
<circle cx="1640.65" cy="756.41" r="3.05" fill="#9bbcd2" stroke="#111" stroke-width="1"/>
<circle cx="1627.76" cy="753.13" r="3.05" fill="#9bbcd2" stroke="#111" stroke-width="1"/>
<circle cx="1613.35" cy="753.41" r="3.05" fill="#9bbcd2" stroke="#111" stroke-width="1"/>
<circle cx="1597.93" cy="752.44" r="3.05" fill="#9bbcd2" stroke="#111" stroke-width="1"/>
<circle cx="1585.74" cy="744.29" r="3.05" fill="#9bbcd2" stroke="#111" stroke-width="1"/>
<circle cx="1572.61" cy="736.74" r="3.05" fill="#9bbcd2" stroke="#111" stroke-width="1"/>
<circle cx="1562.55" cy="725.53" r="3.05" fill="#9bbcd2" stroke="#111" stroke-width="1"/>
<circle cx="1554.64" cy="712.74" r="3.05" fill="#9bbcd2" stroke="#111" stroke-width="1"/>
<circle cx="1547.35" cy="699.55" r="3.05" fill="#9bbcd2" stroke="#111" stroke-width="1"/>
<circle cx="1538.61" cy="686.31" r="3.05" fill="#9bbcd2" stroke="#111" stroke-width="1"/>
<circle cx="1535.56" cy="670.99" r="3.05" fill="#9bbcd2" stroke="#111" stroke-width="1"/>
<circle cx="1551.37" cy="655.40" r="3.05" fill="#9bbcd2" stroke="#111" stroke-width="1"/>
<circle cx="1552.25" cy="642.01" r="3.05" fill="#9bbcd2" stroke="#111" stroke-width="1"/>
<circle cx="1541.32" cy="625.22" r="3.05" fill="#9bbcd2" stroke="#111" stroke-width="1"/>
<circle cx="1546.54" cy="610.91" r="3.05" fill="#9bbcd2" stroke="#111" stroke-width="1"/>
<circle cx="1564.96" cy="604.02" r="3.05" fill="#9bbcd2" stroke="#111" stroke-width="1"/>
<circle cx="1572.57" cy="592.95" r="3.05" fill="#9bbcd2" stroke="#111" stroke-width="1"/>
<circle cx="1562.82" cy="564.27" r="3.05" fill="#9bbcd2" stroke="#111" stroke-width="1"/>
<circle cx="1575.49" cy="553.15" r="3.05" fill="#9bbcd2" stroke="#111" stroke-width="1"/>
<circle cx="1591.61" cy="547.43" r="3.05" fill="#9bbcd2" stroke="#111" stroke-width="1"/>
<circle cx="1606.44" cy="540.70" r="3.05" fill="#9bbcd2" stroke="#111" stroke-width="1"/>
<circle cx="1617.10" cy="517.87" r="3.05" fill="#9bbcd2" stroke="#111" stroke-width="1"/>
<circle cx="1635.46" cy="514.93" r="3.05" fill="#9bbcd2" stroke="#111" stroke-width="1"/>
<path d="M1653.95 527.39L1670.84 527.10L1694.21 505.16L1713.94 510.57L1721.99 537.56L1736.68 547.59L1762.69 546.66L1775.95 561.78L1777.56 584.03L1786.63 600.44L1821.63 610.47L1827.45 632.56L1798.44 655.40L1743.48 667.19L1740.33 678.55L1748.40 694.52L1742.48 706.51L1730.60 714.22L1722.64 724.09L1726.64 750.14L1713.83 759.12L1696.02 756.98L1682.63 762.45L1670.36 780.05L1653.95 781.13L1638.45 773.10L1622.86 771.42L1597.85 790.83L1592.05 762.61L1578.69 753.48L1554.76 754.59L1542.10 741.22L1538.99 721.77L1530.83 706.40L1495.75 697.79L1489.49 677.05L1554.53 655.40L1555.55 642.45L1545.38 626.31L1549.46 612.12L1562.84 602.79L1570.62 591.46L1563.56 565.01L1576.13 553.99L1592.93 549.71L1607.45 543.13L1618.23 522.10L1636.01 519.10Z" fill="none" stroke="#7177a6" stroke-width="2.8" stroke-linejoin="round"/>
<circle cx="1653.95" cy="527.39" r="3.05" fill="#676d9c" stroke="#111" stroke-width="1"/>
<circle cx="1670.84" cy="527.10" r="3.05" fill="#676d9c" stroke="#111" stroke-width="1"/>
<circle cx="1694.21" cy="505.16" r="3.05" fill="#676d9c" stroke="#111" stroke-width="1"/>
<circle cx="1713.94" cy="510.57" r="3.05" fill="#676d9c" stroke="#111" stroke-width="1"/>
<circle cx="1721.99" cy="537.56" r="3.05" fill="#676d9c" stroke="#111" stroke-width="1"/>
<circle cx="1736.68" cy="547.59" r="3.05" fill="#676d9c" stroke="#111" stroke-width="1"/>
<circle cx="1762.69" cy="546.66" r="3.05" fill="#676d9c" stroke="#111" stroke-width="1"/>
<circle cx="1775.95" cy="561.78" r="3.05" fill="#676d9c" stroke="#111" stroke-width="1"/>
<circle cx="1777.56" cy="584.03" r="3.05" fill="#676d9c" stroke="#111" stroke-width="1"/>
<circle cx="1786.63" cy="600.44" r="3.05" fill="#676d9c" stroke="#111" stroke-width="1"/>
<circle cx="1821.63" cy="610.47" r="3.05" fill="#676d9c" stroke="#111" stroke-width="1"/>
<circle cx="1827.45" cy="632.56" r="3.05" fill="#676d9c" stroke="#111" stroke-width="1"/>
<circle cx="1798.44" cy="655.40" r="3.05" fill="#676d9c" stroke="#111" stroke-width="1"/>
<circle cx="1743.48" cy="667.19" r="3.05" fill="#676d9c" stroke="#111" stroke-width="1"/>
<circle cx="1740.33" cy="678.55" r="3.05" fill="#676d9c" stroke="#111" stroke-width="1"/>
<circle cx="1748.40" cy="694.52" r="3.05" fill="#676d9c" stroke="#111" stroke-width="1"/>
<circle cx="1742.48" cy="706.51" r="3.05" fill="#676d9c" stroke="#111" stroke-width="1"/>
<circle cx="1730.60" cy="714.22" r="3.05" fill="#676d9c" stroke="#111" stroke-width="1"/>
<circle cx="1722.64" cy="724.09" r="3.05" fill="#676d9c" stroke="#111" stroke-width="1"/>
<circle cx="1726.64" cy="750.14" r="3.05" fill="#676d9c" stroke="#111" stroke-width="1"/>
<circle cx="1713.83" cy="759.12" r="3.05" fill="#676d9c" stroke="#111" stroke-width="1"/>
<circle cx="1696.02" cy="756.98" r="3.05" fill="#676d9c" stroke="#111" stroke-width="1"/>
<circle cx="1682.63" cy="762.45" r="3.05" fill="#676d9c" stroke="#111" stroke-width="1"/>
<circle cx="1670.36" cy="780.05" r="3.05" fill="#676d9c" stroke="#111" stroke-width="1"/>
<circle cx="1653.95" cy="781.13" r="3.05" fill="#676d9c" stroke="#111" stroke-width="1"/>
<circle cx="1638.45" cy="773.10" r="3.05" fill="#676d9c" stroke="#111" stroke-width="1"/>
<circle cx="1622.86" cy="771.42" r="3.05" fill="#676d9c" stroke="#111" stroke-width="1"/>
<circle cx="1597.85" cy="790.83" r="3.05" fill="#676d9c" stroke="#111" stroke-width="1"/>
<circle cx="1592.05" cy="762.61" r="3.05" fill="#676d9c" stroke="#111" stroke-width="1"/>
<circle cx="1578.69" cy="753.48" r="3.05" fill="#676d9c" stroke="#111" stroke-width="1"/>
<circle cx="1554.76" cy="754.59" r="3.05" fill="#676d9c" stroke="#111" stroke-width="1"/>
<circle cx="1542.10" cy="741.22" r="3.05" fill="#676d9c" stroke="#111" stroke-width="1"/>
<circle cx="1538.99" cy="721.77" r="3.05" fill="#676d9c" stroke="#111" stroke-width="1"/>
<circle cx="1530.83" cy="706.40" r="3.05" fill="#676d9c" stroke="#111" stroke-width="1"/>
<circle cx="1495.75" cy="697.79" r="3.05" fill="#676d9c" stroke="#111" stroke-width="1"/>
<circle cx="1489.49" cy="677.05" r="3.05" fill="#676d9c" stroke="#111" stroke-width="1"/>
<circle cx="1554.53" cy="655.40" r="3.05" fill="#676d9c" stroke="#111" stroke-width="1"/>
<circle cx="1555.55" cy="642.45" r="3.05" fill="#676d9c" stroke="#111" stroke-width="1"/>
<circle cx="1545.38" cy="626.31" r="3.05" fill="#676d9c" stroke="#111" stroke-width="1"/>
<circle cx="1549.46" cy="612.12" r="3.05" fill="#676d9c" stroke="#111" stroke-width="1"/>
<circle cx="1562.84" cy="602.79" r="3.05" fill="#676d9c" stroke="#111" stroke-width="1"/>
<circle cx="1570.62" cy="591.46" r="3.05" fill="#676d9c" stroke="#111" stroke-width="1"/>
<circle cx="1563.56" cy="565.01" r="3.05" fill="#676d9c" stroke="#111" stroke-width="1"/>
<circle cx="1576.13" cy="553.99" r="3.05" fill="#676d9c" stroke="#111" stroke-width="1"/>
<circle cx="1592.93" cy="549.71" r="3.05" fill="#676d9c" stroke="#111" stroke-width="1"/>
<circle cx="1607.45" cy="543.13" r="3.05" fill="#676d9c" stroke="#111" stroke-width="1"/>
<circle cx="1618.23" cy="522.10" r="3.05" fill="#676d9c" stroke="#111" stroke-width="1"/>
<circle cx="1636.01" cy="519.10" r="3.05" fill="#676d9c" stroke="#111" stroke-width="1"/>
<text x="1654.8" y="868" font-size="14.2" text-anchor="middle" fill="#111" textLength="82.5" lengthAdjust="spacingAndGlyphs">Combinazione</text>
<line x1="1478.3" y1="937.6" x2="1513.5" y2="937.6" stroke="#7177a6" stroke-width="3"/>
<circle cx="1496.1" cy="937.6" r="3.8" fill="#676d9c" stroke="#111" stroke-width="1"/>
<text x="1519.0" y="942.3" font-size="14.2" fill="#111" textLength="22.5" lengthAdjust="spacingAndGlyphs">T1X</text>
<line x1="1575.2" y1="937.6" x2="1610.4" y2="937.6" stroke="#9bbcd2" stroke-width="3"/>
<circle cx="1593.0" cy="937.6" r="3.8" fill="#9bbcd2" stroke="#111" stroke-width="1"/>
<text x="1615.9" y="942.3" font-size="14.2" fill="#111" textLength="22.5" lengthAdjust="spacingAndGlyphs">T1Y</text>
<line x1="1672.2" y1="937.6" x2="1707.4" y2="937.6" stroke="#d3da7b" stroke-width="3"/>
<circle cx="1690.0" cy="937.6" r="3.8" fill="#d3da7b" stroke="#111" stroke-width="1"/>
<text x="1712.9" y="942.3" font-size="14.2" fill="#111" textLength="47.5" lengthAdjust="spacingAndGlyphs">&#950;E(SLV)</text>
<line x1="1769.5" y1="937.6" x2="1804.7" y2="937.6" stroke="#ffd974" stroke-width="3"/>
<circle cx="1787.3" cy="937.6" r="3.8" fill="#ffd974" stroke="#111" stroke-width="1"/>
<text x="1810.2" y="942.3" font-size="14.2" fill="#111" textLength="48.0" lengthAdjust="spacingAndGlyphs">&#950;E(SLD)</text>
</svg>
</body></html>
